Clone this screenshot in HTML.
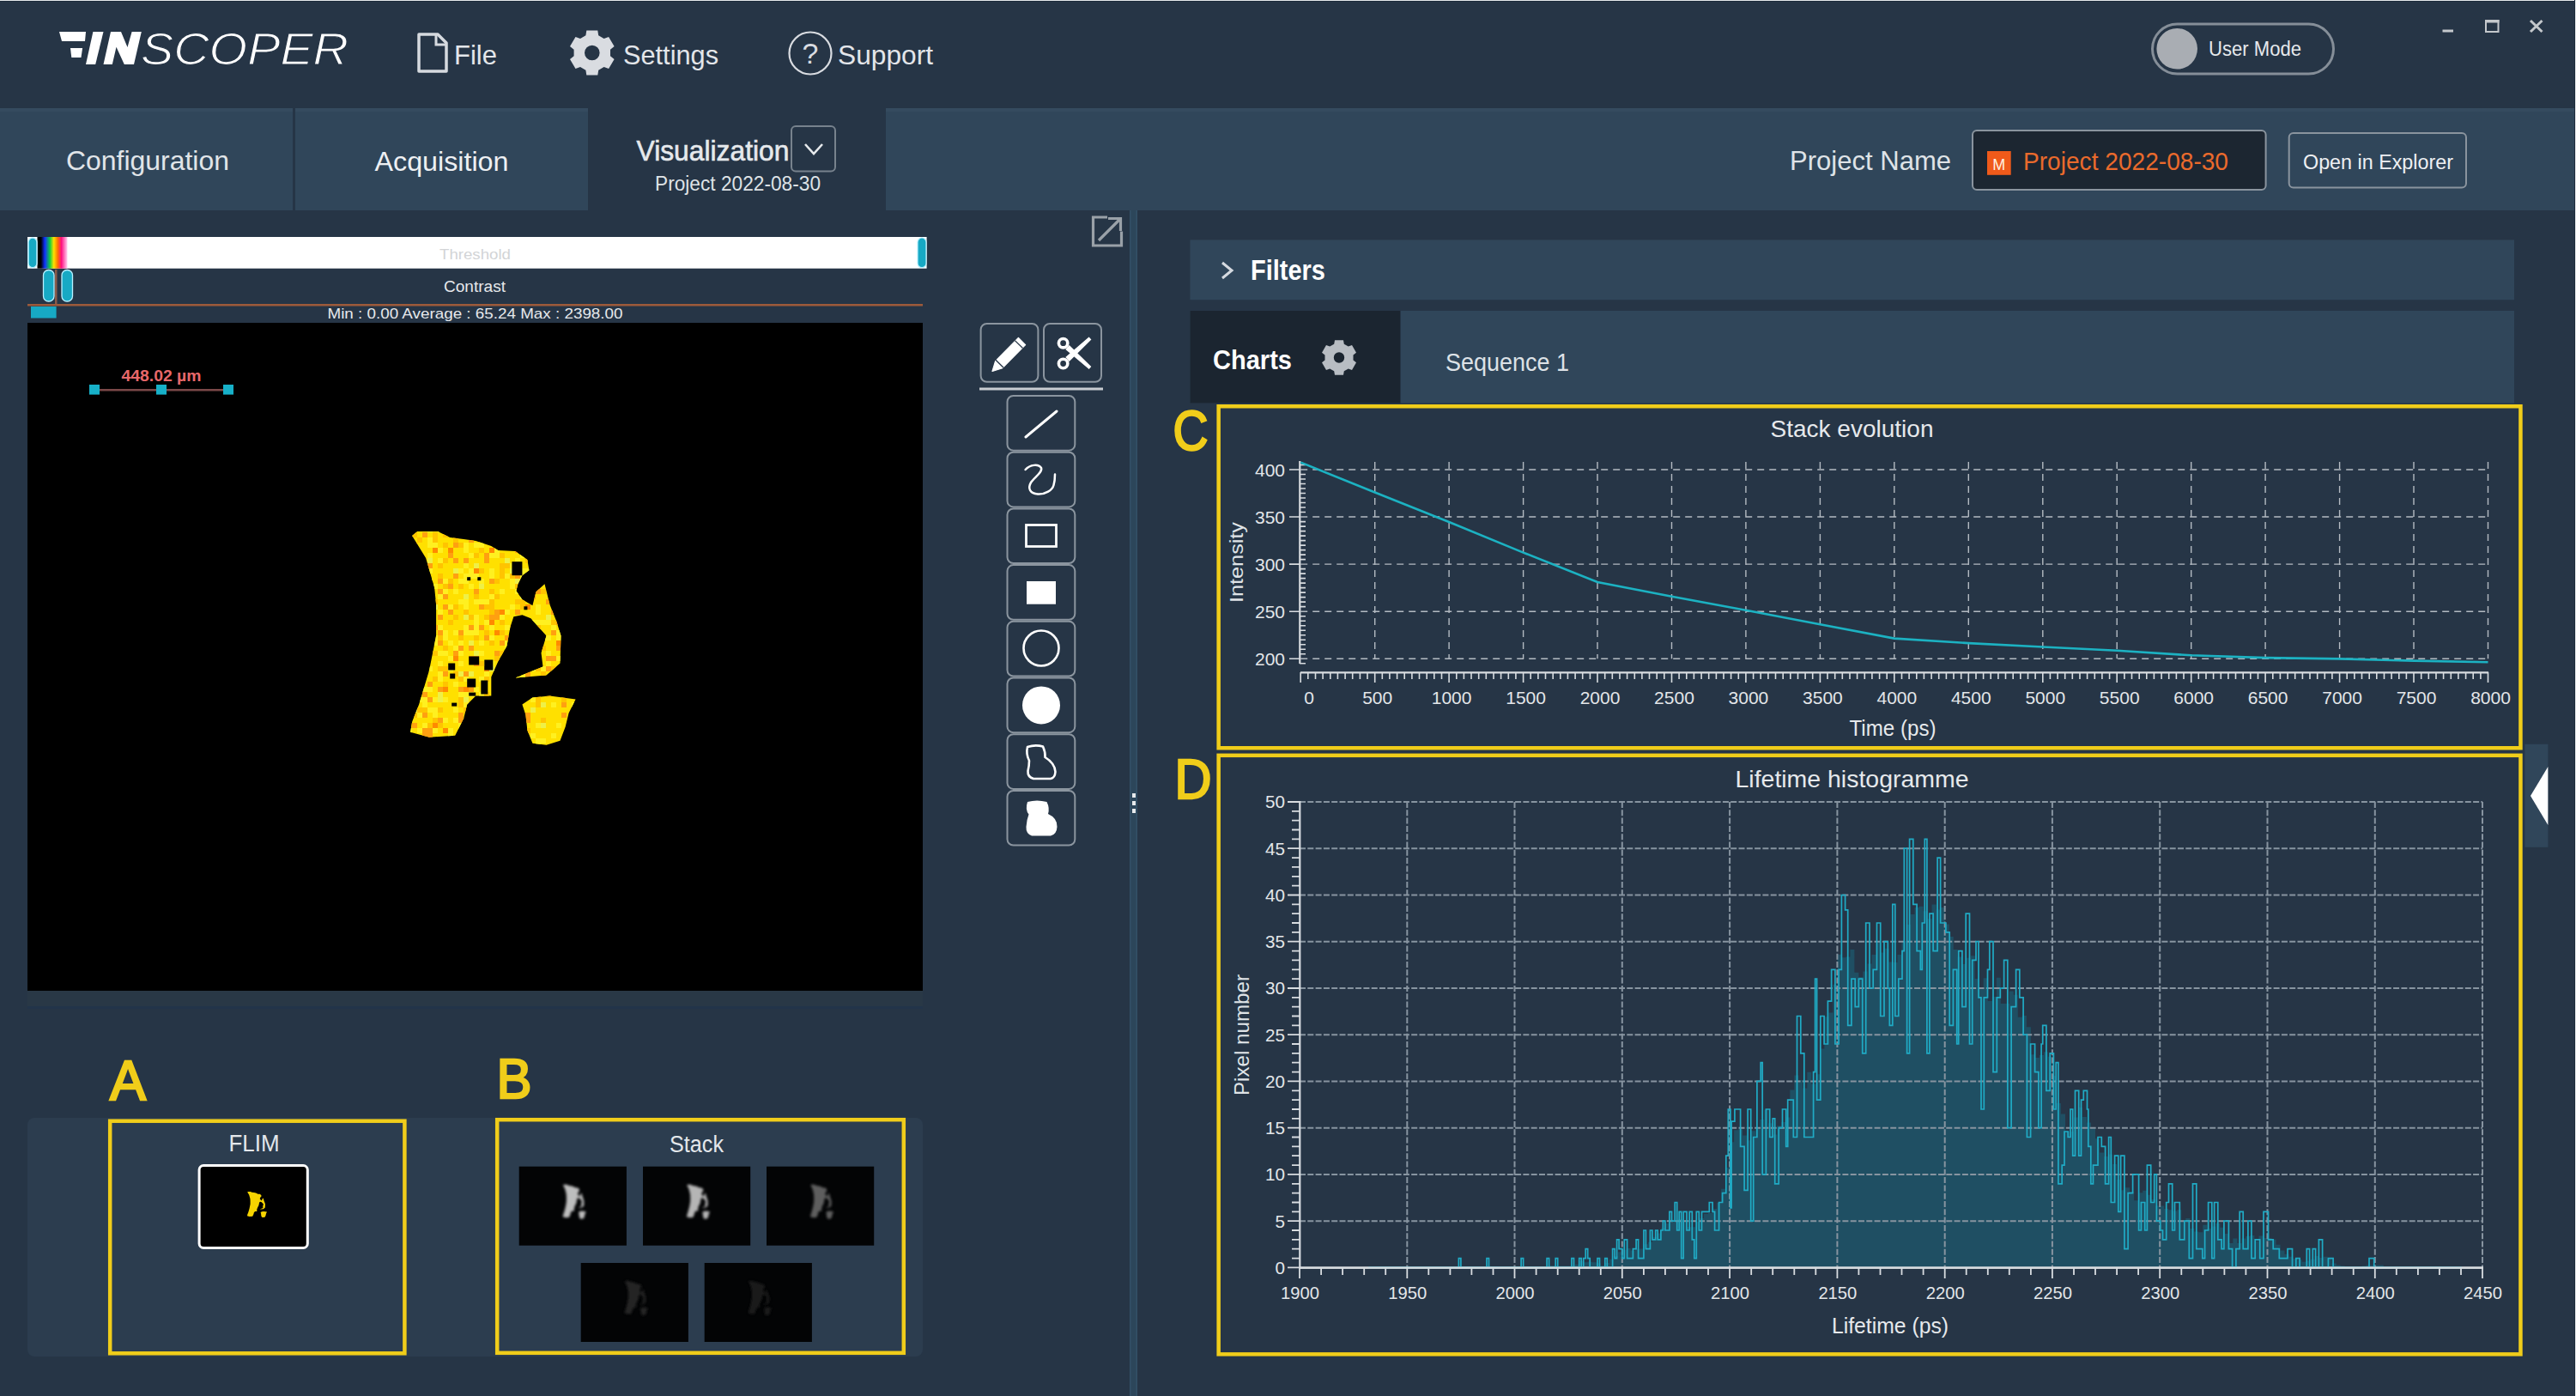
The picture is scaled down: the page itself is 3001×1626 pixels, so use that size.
<!DOCTYPE html><html><head><meta charset="utf-8"><title>Inscoper</title><style>html,body{margin:0;padding:0;background:#263546;overflow:hidden}svg{display:block}text{font-family:"Liberation Sans", sans-serif}</style></head><body>
<svg width="3001" height="1626" viewBox="0 0 3001 1626">
<defs><linearGradient id="rainbow" x1="0" x2="1" y1="0" y2="0"><stop offset="0" stop-color="#000"/><stop offset="0.12" stop-color="#000"/><stop offset="0.25" stop-color="#1030ff"/><stop offset="0.42" stop-color="#10d040"/><stop offset="0.55" stop-color="#ffe000"/><stop offset="0.68" stop-color="#ff7000"/><stop offset="0.8" stop-color="#ff1080"/><stop offset="1" stop-color="#ffd0f0"/></linearGradient></defs>
<rect x="0" y="0" width="3001" height="1626" fill="#263546" />
<g fill="#ffffff">
<polygon points="69,37 100,37 99,48 72,48"/>
<polygon points="82,56 96.1,56 94.5,67 83.3,67"/>
<polygon points="108.4,37 120.5,37 111.2,75 100,75"/>
<polygon points="129,37 141,37 148.5,55 153.6,37 164.8,37 156,75 144.8,75 135.5,54.7 130.8,75 120.5,75"/>
</g>
<text x="164" y="75" font-size="52" fill="#ffffff" textLength="242" lengthAdjust="spacingAndGlyphs" font-style="italic" stroke="#263546" stroke-width="1.2">SCOPER</text>
<path d="M488,40 H510 L520,50 V83 H488 Z" fill="none" stroke="#d6dadf" stroke-width="3.5" stroke-linejoin="round"/>
<path d="M508,40 V52 H520" fill="none" stroke="#d6dadf" stroke-width="3"/>
<text x="529" y="75" font-size="32" fill="#e3e6ea" textLength="50" lengthAdjust="spacingAndGlyphs" >File</text>
<path d="M682.4,41.3 L683.3,35.5 L696.3,35.5 L697.2,41.3 L703.6,45.0 L709.1,42.9 L715.6,54.1 L711.0,57.8 L711.0,65.2 L715.6,68.9 L709.1,80.1 L703.6,78.0 L697.2,81.7 L696.3,87.5 L683.3,87.5 L682.4,81.7 L676.0,78.0 L670.5,80.1 L664.0,68.9 L668.6,65.2 L668.6,57.8 L664.0,54.1 L670.5,42.9 L676.0,45.0 Z M698.5999999999999,61.5 A8.8,8.8 0 1 0 681.0,61.5 A8.8,8.8 0 1 0 698.5999999999999,61.5 Z" fill="#d9dce1" fill-rule="evenodd"/>
<text x="726" y="74.5" font-size="32" fill="#e3e6ea" textLength="111" lengthAdjust="spacingAndGlyphs" >Settings</text>
<circle cx="944" cy="62" r="24.5" fill="none" stroke="#d9dce1" stroke-width="2.2"/>
<text x="944" y="74" font-size="34" fill="#d9dce1" text-anchor="middle" >?</text>
<text x="976" y="74.5" font-size="32" fill="#e3e6ea" textLength="111" lengthAdjust="spacingAndGlyphs" >Support</text>
<rect x="2507.5" y="28" width="211" height="58" rx="29" fill="none" stroke="#858e98" stroke-width="3"/>
<circle cx="2536.2" cy="56.8" r="23.8" fill="#a9adb3"/>
<text x="2573" y="64.6" font-size="23" fill="#e6e9ec" textLength="108" lengthAdjust="spacingAndGlyphs" >User Mode</text>
<rect x="2845.5" y="34.5" width="12.5" height="3" fill="#c4c8cc" />
<rect x="2896" y="24" width="14.5" height="13" fill="none" stroke="#c4c8cc" stroke-width="2"/>
<rect x="2895" y="23" width="16.5" height="3.5" fill="#c4c8cc" />
<path d="M2948,24 L2961.5,37 M2961.5,24 L2948,37" stroke="#c4c8cc" stroke-width="3"/>
<rect x="0" y="126" width="3001" height="119" fill="#30465a" />
<rect x="0" y="126" width="3001" height="4" fill="#354b5f" />
<rect x="341" y="126" width="3" height="119" fill="#263546" />
<rect x="685" y="126" width="347" height="119" fill="#263546" />
<text x="77" y="198" font-size="30.7" fill="#e1e5e9" textLength="190" lengthAdjust="spacingAndGlyphs" >Configuration</text>
<text x="436.5" y="198.5" font-size="30.7" fill="#eef0f3" textLength="156" lengthAdjust="spacingAndGlyphs" >Acquisition</text>
<text x="741.5" y="187" font-size="33.5" fill="#e6e9ec" textLength="178" lengthAdjust="spacingAndGlyphs" stroke="#e6e9ec" stroke-width="0.6">Visualization</text>
<rect x="922" y="147" width="51" height="52.6" rx="5" fill="none" stroke="#77828d" stroke-width="2"/>
<path d="M938,168 L948,179 L958,168" fill="none" stroke="#e6e9ec" stroke-width="2.6"/>
<text x="763" y="222" font-size="23" fill="#dfe3e7" textLength="193" lengthAdjust="spacingAndGlyphs" >Project 2022-08-30</text>
<text x="2085" y="198" font-size="32" fill="#dfe3e7" textLength="188" lengthAdjust="spacingAndGlyphs" >Project Name</text>
<rect x="2298" y="152" width="341.6" height="69" rx="5" fill="#1c2631" stroke="#8a949e" stroke-width="2"/>
<rect x="2315" y="176" width="27.7" height="27.8" fill="#f05a1a" />
<text x="2328.8" y="197.5" font-size="19" fill="#fff0e0" text-anchor="middle" textLength="15" lengthAdjust="spacingAndGlyphs" >M</text>
<text x="2357" y="198" font-size="29.3" fill="#ea6a2c" textLength="239" lengthAdjust="spacingAndGlyphs" >Project 2022-08-30</text>
<rect x="2666.7" y="155" width="206.3" height="63.6" rx="5" fill="none" stroke="#8a949e" stroke-width="2"/>
<text x="2683" y="196.7" font-size="24.7" fill="#eef0f3" textLength="175" lengthAdjust="spacingAndGlyphs" >Open in Explorer</text>
<path d="M1290,253 H1273.5 V286 H1306.5 V269.5" fill="none" stroke="#9aa1a8" stroke-width="3.2"/>
<path d="M1280,280 L1304,256 M1291,254.5 H1305.5 V269" fill="none" stroke="#9aa1a8" stroke-width="3.2"/>
<rect x="32" y="276" width="1047.6" height="36.7" fill="#ffffff" />
<rect x="43.5" y="276" width="35" height="36.7" fill="url(#rainbow)" />
<rect x="33" y="277" width="10" height="34.7" rx="5" fill="#17a9c4" stroke="#b8f0ff" stroke-width="1.5"/>
<rect x="1069" y="277" width="10" height="34.7" rx="5" fill="#17a9c4" stroke="#b8f0ff" stroke-width="1.2"/>
<text x="512" y="301.5" font-size="17" fill="#d2d4d6" textLength="83" lengthAdjust="spacingAndGlyphs" >Threshold</text>
<rect x="64" y="314" width="2.5" height="41" fill="#8a5a48" />
<rect x="50.5" y="314.5" width="12.5" height="36.5" rx="6" fill="#17a9c4" stroke="#b8f0ff" stroke-width="1.3"/>
<rect x="72" y="314.5" width="12.5" height="36.5" rx="6" fill="#17a9c4" stroke="#b8f0ff" stroke-width="1.3"/>
<text x="517" y="340" font-size="18" fill="#e6e9ec" textLength="72" lengthAdjust="spacingAndGlyphs" >Contrast</text>
<rect x="32" y="354" width="1043" height="2.5" fill="#9c5a3a" />
<rect x="36" y="357" width="29.6" height="13.5" fill="#17a9c4" />
<text x="381.5" y="371" font-size="17" fill="#e6e9ec" textLength="344" lengthAdjust="spacingAndGlyphs" >Min : 0.00 Average : 65.24 Max : 2398.00</text>
<rect x="32" y="376" width="1043" height="778" fill="#000000" />
<rect x="32" y="1154" width="1043" height="18" fill="#293846" />
<rect x="32" y="1172" width="1043" height="3" fill="#22344a" />
<rect x="110" y="453" width="156" height="2.5" fill="#7a4848" />
<rect x="104" y="448" width="12" height="11.6" fill="#17b0c8" />
<rect x="182" y="448" width="12" height="11.6" fill="#17b0c8" />
<rect x="260" y="448" width="12" height="11.6" fill="#17b0c8" />
<text x="141.5" y="444" font-size="18" fill="#e8686a" font-weight="700" textLength="93" lengthAdjust="spacingAndGlyphs" >448.02 µm</text>
<defs><clipPath id="blobclip"><polygon points="480.1,624.1 486.1,619.1 510.1,619.1 524.2,626.1 540.2,628.1 554.3,630.1 572.3,636.1 580.3,641.1 600.4,642.1 614.4,652.1 616.4,664.2 608.4,670.2 603.4,680.2 601.4,688.2 608.4,698.3 620.4,705.3 624.5,689.2 634.5,680.2 640.5,704.3 648.5,724.3 653.5,740.4 652.5,772.5 636.5,786.5 600.4,789.5 632.5,776.5 630.5,760.4 636.5,740.4 618.4,720.3 608.4,716.3 598.4,718.3 594.4,730.4 590.4,752.4 580.3,770.5 572.3,788.5 572.3,810.6 554.3,810.6 544.2,820.6 540.2,836.7 530.2,856.7 500.1,858.7 478.1,852.7 480.1,840.7 488.1,820.6 494.1,800.6 500.1,780.5 504.1,760.4 508.1,740.4 508.1,704.3 506.1,684.2 496.1,650.1"/><polygon points="608.4,820.6 620.4,812.6 640.5,810.6 670.6,814.6 662.6,830.6 658.6,846.7 652.5,862.7 636.5,867.7 620.4,865.7 614.4,850.7 612.4,832.7"/></clipPath></defs>
<g clip-path="url(#blobclip)"><rect x="470" y="610" width="210" height="270" fill="#ffe000"/>
<rect x="474" y="620" width="6" height="6" fill="#fff020"/><rect x="474" y="626" width="6" height="6" fill="#ffa010"/><rect x="474" y="644" width="6" height="6" fill="#fff020"/><rect x="474" y="662" width="6" height="6" fill="#fff020"/><rect x="474" y="668" width="6" height="6" fill="#ffc400"/><rect x="474" y="692" width="6" height="6" fill="#ffc400"/><rect x="474" y="698" width="6" height="6" fill="#fff020"/><rect x="474" y="710" width="6" height="6" fill="#eef048"/><rect x="474" y="716" width="6" height="6" fill="#ff8a00"/><rect x="474" y="722" width="6" height="6" fill="#fff020"/><rect x="474" y="728" width="6" height="6" fill="#fff020"/><rect x="474" y="788" width="6" height="6" fill="#ffc400"/><rect x="474" y="800" width="6" height="6" fill="#fff020"/><rect x="474" y="812" width="6" height="6" fill="#fff020"/><rect x="474" y="830" width="6" height="6" fill="#eef048"/><rect x="474" y="836" width="6" height="6" fill="#eef048"/><rect x="474" y="842" width="6" height="6" fill="#ffc400"/><rect x="474" y="848" width="6" height="6" fill="#fff020"/><rect x="474" y="878" width="6" height="6" fill="#ffc400"/><rect x="480" y="620" width="6" height="6" fill="#ffc400"/><rect x="480" y="632" width="6" height="6" fill="#ff8a00"/><rect x="480" y="638" width="6" height="6" fill="#ffc400"/><rect x="480" y="656" width="6" height="6" fill="#ffa010"/><rect x="480" y="668" width="6" height="6" fill="#eef048"/><rect x="480" y="686" width="6" height="6" fill="#fff020"/><rect x="480" y="692" width="6" height="6" fill="#ffc400"/><rect x="480" y="716" width="6" height="6" fill="#ff8a00"/><rect x="480" y="722" width="6" height="6" fill="#ffc400"/><rect x="480" y="752" width="6" height="6" fill="#ffc400"/><rect x="480" y="764" width="6" height="6" fill="#fff020"/><rect x="480" y="782" width="6" height="6" fill="#fff020"/><rect x="480" y="794" width="6" height="6" fill="#fff020"/><rect x="480" y="824" width="6" height="6" fill="#eef048"/><rect x="480" y="830" width="6" height="6" fill="#ffc400"/><rect x="480" y="842" width="6" height="6" fill="#ffa010"/><rect x="480" y="860" width="6" height="6" fill="#ffc400"/><rect x="480" y="866" width="6" height="6" fill="#fff020"/><rect x="480" y="878" width="6" height="6" fill="#eef048"/><rect x="486" y="626" width="6" height="6" fill="#ffc400"/><rect x="486" y="656" width="6" height="6" fill="#fff020"/><rect x="486" y="668" width="6" height="6" fill="#fff020"/><rect x="486" y="686" width="6" height="6" fill="#ff8a00"/><rect x="486" y="698" width="6" height="6" fill="#fff020"/><rect x="486" y="704" width="6" height="6" fill="#ffa010"/><rect x="486" y="722" width="6" height="6" fill="#ffa010"/><rect x="486" y="728" width="6" height="6" fill="#ffc400"/><rect x="486" y="746" width="6" height="6" fill="#fff020"/><rect x="486" y="752" width="6" height="6" fill="#ffa010"/><rect x="486" y="764" width="6" height="6" fill="#ff8a00"/><rect x="486" y="770" width="6" height="6" fill="#ffa010"/><rect x="486" y="776" width="6" height="6" fill="#fff020"/><rect x="486" y="800" width="6" height="6" fill="#ff8a00"/><rect x="486" y="812" width="6" height="6" fill="#fff020"/><rect x="486" y="824" width="6" height="6" fill="#ffc400"/><rect x="486" y="830" width="6" height="6" fill="#fff020"/><rect x="486" y="848" width="6" height="6" fill="#fff020"/><rect x="486" y="866" width="6" height="6" fill="#fff020"/><rect x="486" y="872" width="6" height="6" fill="#ffc400"/><rect x="486" y="878" width="6" height="6" fill="#fff020"/><rect x="492" y="620" width="6" height="6" fill="#ffa010"/><rect x="492" y="668" width="6" height="6" fill="#fff020"/><rect x="492" y="686" width="6" height="6" fill="#ffa010"/><rect x="492" y="692" width="6" height="6" fill="#eef048"/><rect x="492" y="698" width="6" height="6" fill="#fff020"/><rect x="492" y="704" width="6" height="6" fill="#fff020"/><rect x="492" y="710" width="6" height="6" fill="#fff020"/><rect x="492" y="734" width="6" height="6" fill="#ffa010"/><rect x="492" y="740" width="6" height="6" fill="#fff020"/><rect x="492" y="746" width="6" height="6" fill="#ff8a00"/><rect x="492" y="758" width="6" height="6" fill="#fff020"/><rect x="492" y="770" width="6" height="6" fill="#fff020"/><rect x="492" y="782" width="6" height="6" fill="#eef048"/><rect x="492" y="800" width="6" height="6" fill="#fff020"/><rect x="492" y="806" width="6" height="6" fill="#ffa010"/><rect x="492" y="812" width="6" height="6" fill="#fff020"/><rect x="492" y="818" width="6" height="6" fill="#fff020"/><rect x="492" y="824" width="6" height="6" fill="#ffc400"/><rect x="492" y="830" width="6" height="6" fill="#ffa010"/><rect x="492" y="842" width="6" height="6" fill="#fff020"/><rect x="492" y="848" width="6" height="6" fill="#ffa010"/><rect x="492" y="854" width="6" height="6" fill="#ffa010"/><rect x="492" y="866" width="6" height="6" fill="#ffc400"/><rect x="492" y="872" width="6" height="6" fill="#ffa010"/><rect x="492" y="878" width="6" height="6" fill="#fff020"/><rect x="498" y="614" width="6" height="6" fill="#fff020"/><rect x="498" y="626" width="6" height="6" fill="#fff020"/><rect x="498" y="632" width="6" height="6" fill="#fff020"/><rect x="498" y="644" width="6" height="6" fill="#fff020"/><rect x="498" y="650" width="6" height="6" fill="#eef048"/><rect x="498" y="656" width="6" height="6" fill="#ffa010"/><rect x="498" y="662" width="6" height="6" fill="#fff020"/><rect x="498" y="674" width="6" height="6" fill="#fff020"/><rect x="498" y="680" width="6" height="6" fill="#fff020"/><rect x="498" y="692" width="6" height="6" fill="#ffc400"/><rect x="498" y="704" width="6" height="6" fill="#ffc400"/><rect x="498" y="716" width="6" height="6" fill="#fff020"/><rect x="498" y="734" width="6" height="6" fill="#fff020"/><rect x="498" y="746" width="6" height="6" fill="#fff020"/><rect x="498" y="752" width="6" height="6" fill="#ffa010"/><rect x="498" y="776" width="6" height="6" fill="#fff020"/><rect x="498" y="794" width="6" height="6" fill="#ffa010"/><rect x="498" y="800" width="6" height="6" fill="#fff020"/><rect x="498" y="812" width="6" height="6" fill="#ffa010"/><rect x="498" y="824" width="6" height="6" fill="#fff020"/><rect x="498" y="842" width="6" height="6" fill="#ffc400"/><rect x="498" y="848" width="6" height="6" fill="#ffa010"/><rect x="498" y="854" width="6" height="6" fill="#ffa010"/><rect x="498" y="866" width="6" height="6" fill="#fff020"/><rect x="504" y="620" width="6" height="6" fill="#ffc400"/><rect x="504" y="626" width="6" height="6" fill="#ffc400"/><rect x="504" y="632" width="6" height="6" fill="#fff020"/><rect x="504" y="638" width="6" height="6" fill="#ff8a00"/><rect x="504" y="680" width="6" height="6" fill="#fff020"/><rect x="504" y="698" width="6" height="6" fill="#ffc400"/><rect x="504" y="704" width="6" height="6" fill="#eef048"/><rect x="504" y="728" width="6" height="6" fill="#ffa010"/><rect x="504" y="740" width="6" height="6" fill="#fff020"/><rect x="504" y="746" width="6" height="6" fill="#fff020"/><rect x="504" y="758" width="6" height="6" fill="#ffc400"/><rect x="504" y="788" width="6" height="6" fill="#ffc400"/><rect x="504" y="812" width="6" height="6" fill="#fff020"/><rect x="504" y="824" width="6" height="6" fill="#fff020"/><rect x="504" y="830" width="6" height="6" fill="#fff020"/><rect x="504" y="836" width="6" height="6" fill="#ffc400"/><rect x="504" y="842" width="6" height="6" fill="#ff8a00"/><rect x="504" y="848" width="6" height="6" fill="#fff020"/><rect x="510" y="614" width="6" height="6" fill="#fff020"/><rect x="510" y="638" width="6" height="6" fill="#fff020"/><rect x="510" y="650" width="6" height="6" fill="#fff020"/><rect x="510" y="656" width="6" height="6" fill="#ffc400"/><rect x="510" y="668" width="6" height="6" fill="#ffc400"/><rect x="510" y="674" width="6" height="6" fill="#ffa010"/><rect x="510" y="686" width="6" height="6" fill="#ffa010"/><rect x="510" y="692" width="6" height="6" fill="#fff020"/><rect x="510" y="710" width="6" height="6" fill="#fff020"/><rect x="510" y="716" width="6" height="6" fill="#ffa010"/><rect x="510" y="728" width="6" height="6" fill="#fff020"/><rect x="510" y="734" width="6" height="6" fill="#ffa010"/><rect x="510" y="740" width="6" height="6" fill="#ffc400"/><rect x="510" y="746" width="6" height="6" fill="#ffa010"/><rect x="510" y="758" width="6" height="6" fill="#fff020"/><rect x="510" y="770" width="6" height="6" fill="#fff020"/><rect x="510" y="776" width="6" height="6" fill="#ffc400"/><rect x="510" y="782" width="6" height="6" fill="#fff020"/><rect x="510" y="788" width="6" height="6" fill="#fff020"/><rect x="510" y="800" width="6" height="6" fill="#ffa010"/><rect x="510" y="806" width="6" height="6" fill="#eef048"/><rect x="510" y="812" width="6" height="6" fill="#eef048"/><rect x="510" y="824" width="6" height="6" fill="#ffc400"/><rect x="510" y="836" width="6" height="6" fill="#ffa010"/><rect x="510" y="842" width="6" height="6" fill="#ffc400"/><rect x="510" y="866" width="6" height="6" fill="#fff020"/><rect x="510" y="872" width="6" height="6" fill="#ffc400"/><rect x="516" y="620" width="6" height="6" fill="#ffc400"/><rect x="516" y="632" width="6" height="6" fill="#ffc400"/><rect x="516" y="650" width="6" height="6" fill="#ffc400"/><rect x="516" y="674" width="6" height="6" fill="#fff020"/><rect x="516" y="680" width="6" height="6" fill="#ffc400"/><rect x="516" y="686" width="6" height="6" fill="#fff020"/><rect x="516" y="692" width="6" height="6" fill="#ffa010"/><rect x="516" y="704" width="6" height="6" fill="#ffa010"/><rect x="516" y="734" width="6" height="6" fill="#fff020"/><rect x="516" y="740" width="6" height="6" fill="#fff020"/><rect x="516" y="752" width="6" height="6" fill="#ffc400"/><rect x="516" y="758" width="6" height="6" fill="#fff020"/><rect x="516" y="776" width="6" height="6" fill="#ffc400"/><rect x="516" y="782" width="6" height="6" fill="#ffa010"/><rect x="516" y="794" width="6" height="6" fill="#ffc400"/><rect x="516" y="800" width="6" height="6" fill="#ff8a00"/><rect x="516" y="812" width="6" height="6" fill="#fff020"/><rect x="516" y="836" width="6" height="6" fill="#fff020"/><rect x="516" y="848" width="6" height="6" fill="#ff8a00"/><rect x="516" y="866" width="6" height="6" fill="#ffc400"/><rect x="516" y="872" width="6" height="6" fill="#fff020"/><rect x="522" y="614" width="6" height="6" fill="#fff020"/><rect x="522" y="638" width="6" height="6" fill="#ff8a00"/><rect x="522" y="644" width="6" height="6" fill="#ffa010"/><rect x="522" y="674" width="6" height="6" fill="#ffc400"/><rect x="522" y="680" width="6" height="6" fill="#ffa010"/><rect x="522" y="704" width="6" height="6" fill="#fff020"/><rect x="522" y="710" width="6" height="6" fill="#ffa010"/><rect x="522" y="722" width="6" height="6" fill="#ffc400"/><rect x="522" y="746" width="6" height="6" fill="#fff020"/><rect x="522" y="764" width="6" height="6" fill="#fff020"/><rect x="522" y="776" width="6" height="6" fill="#fff020"/><rect x="522" y="848" width="6" height="6" fill="#fff020"/><rect x="522" y="854" width="6" height="6" fill="#fff020"/><rect x="522" y="866" width="6" height="6" fill="#ffc400"/><rect x="522" y="872" width="6" height="6" fill="#fff020"/><rect x="522" y="878" width="6" height="6" fill="#ffc400"/><rect x="528" y="620" width="6" height="6" fill="#fff020"/><rect x="528" y="626" width="6" height="6" fill="#ffc400"/><rect x="528" y="632" width="6" height="6" fill="#ffa010"/><rect x="528" y="650" width="6" height="6" fill="#ffa010"/><rect x="528" y="662" width="6" height="6" fill="#eef048"/><rect x="528" y="668" width="6" height="6" fill="#ffa010"/><rect x="528" y="686" width="6" height="6" fill="#fff020"/><rect x="528" y="704" width="6" height="6" fill="#ffc400"/><rect x="528" y="716" width="6" height="6" fill="#ffc400"/><rect x="528" y="734" width="6" height="6" fill="#fff020"/><rect x="528" y="752" width="6" height="6" fill="#fff020"/><rect x="528" y="758" width="6" height="6" fill="#ffa010"/><rect x="528" y="764" width="6" height="6" fill="#ff8a00"/><rect x="528" y="782" width="6" height="6" fill="#ffc400"/><rect x="528" y="794" width="6" height="6" fill="#fff020"/><rect x="528" y="824" width="6" height="6" fill="#fff020"/><rect x="528" y="836" width="6" height="6" fill="#fff020"/><rect x="528" y="860" width="6" height="6" fill="#ffc400"/><rect x="528" y="866" width="6" height="6" fill="#eef048"/><rect x="528" y="872" width="6" height="6" fill="#ffa010"/><rect x="534" y="620" width="6" height="6" fill="#ff8a00"/><rect x="534" y="632" width="6" height="6" fill="#ffc400"/><rect x="534" y="662" width="6" height="6" fill="#fff020"/><rect x="534" y="674" width="6" height="6" fill="#fff020"/><rect x="534" y="680" width="6" height="6" fill="#ffc400"/><rect x="534" y="698" width="6" height="6" fill="#fff020"/><rect x="534" y="734" width="6" height="6" fill="#ffa010"/><rect x="534" y="740" width="6" height="6" fill="#ffc400"/><rect x="534" y="746" width="6" height="6" fill="#fff020"/><rect x="534" y="752" width="6" height="6" fill="#ffa010"/><rect x="534" y="758" width="6" height="6" fill="#fff020"/><rect x="534" y="770" width="6" height="6" fill="#fff020"/><rect x="534" y="782" width="6" height="6" fill="#eef048"/><rect x="534" y="788" width="6" height="6" fill="#ffc400"/><rect x="534" y="800" width="6" height="6" fill="#ffa010"/><rect x="534" y="806" width="6" height="6" fill="#fff020"/><rect x="534" y="812" width="6" height="6" fill="#ffc400"/><rect x="534" y="818" width="6" height="6" fill="#ffc400"/><rect x="534" y="830" width="6" height="6" fill="#ffa010"/><rect x="534" y="836" width="6" height="6" fill="#ffa010"/><rect x="534" y="842" width="6" height="6" fill="#fff020"/><rect x="534" y="848" width="6" height="6" fill="#ffc400"/><rect x="534" y="854" width="6" height="6" fill="#ffc400"/><rect x="534" y="866" width="6" height="6" fill="#fff020"/><rect x="540" y="632" width="6" height="6" fill="#fff020"/><rect x="540" y="638" width="6" height="6" fill="#fff020"/><rect x="540" y="650" width="6" height="6" fill="#ffa010"/><rect x="540" y="656" width="6" height="6" fill="#fff020"/><rect x="540" y="668" width="6" height="6" fill="#fff020"/><rect x="540" y="674" width="6" height="6" fill="#fff020"/><rect x="540" y="692" width="6" height="6" fill="#eef048"/><rect x="540" y="698" width="6" height="6" fill="#fff020"/><rect x="540" y="704" width="6" height="6" fill="#fff020"/><rect x="540" y="710" width="6" height="6" fill="#ffc400"/><rect x="540" y="716" width="6" height="6" fill="#eef048"/><rect x="540" y="728" width="6" height="6" fill="#fff020"/><rect x="540" y="734" width="6" height="6" fill="#fff020"/><rect x="540" y="782" width="6" height="6" fill="#ffa010"/><rect x="540" y="788" width="6" height="6" fill="#fff020"/><rect x="540" y="800" width="6" height="6" fill="#ff8a00"/><rect x="540" y="806" width="6" height="6" fill="#fff020"/><rect x="540" y="812" width="6" height="6" fill="#eef048"/><rect x="540" y="818" width="6" height="6" fill="#fff020"/><rect x="540" y="824" width="6" height="6" fill="#ffc400"/><rect x="540" y="836" width="6" height="6" fill="#fff020"/><rect x="540" y="842" width="6" height="6" fill="#ffc400"/><rect x="540" y="854" width="6" height="6" fill="#ffa010"/><rect x="546" y="614" width="6" height="6" fill="#fff020"/><rect x="546" y="626" width="6" height="6" fill="#ffa010"/><rect x="546" y="644" width="6" height="6" fill="#fff020"/><rect x="546" y="662" width="6" height="6" fill="#fff020"/><rect x="546" y="668" width="6" height="6" fill="#fff020"/><rect x="546" y="680" width="6" height="6" fill="#fff020"/><rect x="546" y="716" width="6" height="6" fill="#ffc400"/><rect x="546" y="728" width="6" height="6" fill="#ffa010"/><rect x="546" y="734" width="6" height="6" fill="#fff020"/><rect x="546" y="746" width="6" height="6" fill="#eef048"/><rect x="546" y="752" width="6" height="6" fill="#ffa010"/><rect x="546" y="764" width="6" height="6" fill="#ffa010"/><rect x="546" y="782" width="6" height="6" fill="#eef048"/><rect x="546" y="800" width="6" height="6" fill="#ffa010"/><rect x="546" y="806" width="6" height="6" fill="#fff020"/><rect x="546" y="818" width="6" height="6" fill="#eef048"/><rect x="546" y="824" width="6" height="6" fill="#ffc400"/><rect x="546" y="830" width="6" height="6" fill="#fff020"/><rect x="546" y="842" width="6" height="6" fill="#fff020"/><rect x="552" y="614" width="6" height="6" fill="#fff020"/><rect x="552" y="632" width="6" height="6" fill="#fff020"/><rect x="552" y="644" width="6" height="6" fill="#ffc400"/><rect x="552" y="656" width="6" height="6" fill="#eef048"/><rect x="552" y="662" width="6" height="6" fill="#ff8a00"/><rect x="552" y="668" width="6" height="6" fill="#fff020"/><rect x="552" y="686" width="6" height="6" fill="#ffa010"/><rect x="552" y="692" width="6" height="6" fill="#ffc400"/><rect x="552" y="698" width="6" height="6" fill="#fff020"/><rect x="552" y="716" width="6" height="6" fill="#fff020"/><rect x="552" y="722" width="6" height="6" fill="#fff020"/><rect x="552" y="728" width="6" height="6" fill="#fff020"/><rect x="552" y="734" width="6" height="6" fill="#fff020"/><rect x="552" y="740" width="6" height="6" fill="#ffc400"/><rect x="552" y="758" width="6" height="6" fill="#eef048"/><rect x="552" y="764" width="6" height="6" fill="#ffa010"/><rect x="552" y="770" width="6" height="6" fill="#ffa010"/><rect x="552" y="800" width="6" height="6" fill="#fff020"/><rect x="552" y="830" width="6" height="6" fill="#fff020"/><rect x="552" y="836" width="6" height="6" fill="#fff020"/><rect x="552" y="842" width="6" height="6" fill="#fff020"/><rect x="552" y="872" width="6" height="6" fill="#fff020"/><rect x="552" y="878" width="6" height="6" fill="#ffc400"/><rect x="558" y="626" width="6" height="6" fill="#ffc400"/><rect x="558" y="632" width="6" height="6" fill="#fff020"/><rect x="558" y="638" width="6" height="6" fill="#ffc400"/><rect x="558" y="662" width="6" height="6" fill="#ffc400"/><rect x="558" y="674" width="6" height="6" fill="#fff020"/><rect x="558" y="680" width="6" height="6" fill="#eef048"/><rect x="558" y="698" width="6" height="6" fill="#fff020"/><rect x="558" y="704" width="6" height="6" fill="#ffa010"/><rect x="558" y="728" width="6" height="6" fill="#ffa010"/><rect x="558" y="746" width="6" height="6" fill="#fff020"/><rect x="558" y="758" width="6" height="6" fill="#fff020"/><rect x="558" y="770" width="6" height="6" fill="#ffc400"/><rect x="558" y="788" width="6" height="6" fill="#fff020"/><rect x="558" y="806" width="6" height="6" fill="#fff020"/><rect x="558" y="812" width="6" height="6" fill="#fff020"/><rect x="558" y="836" width="6" height="6" fill="#fff020"/><rect x="558" y="854" width="6" height="6" fill="#fff020"/><rect x="558" y="860" width="6" height="6" fill="#fff020"/><rect x="558" y="866" width="6" height="6" fill="#ffa010"/><rect x="558" y="872" width="6" height="6" fill="#ffa010"/><rect x="558" y="878" width="6" height="6" fill="#ffa010"/><rect x="564" y="620" width="6" height="6" fill="#ffc400"/><rect x="564" y="644" width="6" height="6" fill="#ffa010"/><rect x="564" y="650" width="6" height="6" fill="#ffa010"/><rect x="564" y="698" width="6" height="6" fill="#fff020"/><rect x="564" y="704" width="6" height="6" fill="#ffc400"/><rect x="564" y="716" width="6" height="6" fill="#ffc400"/><rect x="564" y="722" width="6" height="6" fill="#fff020"/><rect x="564" y="734" width="6" height="6" fill="#ffc400"/><rect x="564" y="740" width="6" height="6" fill="#ffa010"/><rect x="564" y="770" width="6" height="6" fill="#fff020"/><rect x="564" y="776" width="6" height="6" fill="#ff8a00"/><rect x="564" y="782" width="6" height="6" fill="#fff020"/><rect x="564" y="788" width="6" height="6" fill="#ffc400"/><rect x="564" y="806" width="6" height="6" fill="#ffc400"/><rect x="564" y="824" width="6" height="6" fill="#fff020"/><rect x="564" y="830" width="6" height="6" fill="#ffa010"/><rect x="564" y="842" width="6" height="6" fill="#fff020"/><rect x="564" y="854" width="6" height="6" fill="#fff020"/><rect x="564" y="860" width="6" height="6" fill="#fff020"/><rect x="564" y="878" width="6" height="6" fill="#ffc400"/><rect x="570" y="620" width="6" height="6" fill="#ffc400"/><rect x="570" y="638" width="6" height="6" fill="#ff8a00"/><rect x="570" y="644" width="6" height="6" fill="#fff020"/><rect x="570" y="662" width="6" height="6" fill="#fff020"/><rect x="570" y="668" width="6" height="6" fill="#fff020"/><rect x="570" y="674" width="6" height="6" fill="#ffa010"/><rect x="570" y="686" width="6" height="6" fill="#ffc400"/><rect x="570" y="692" width="6" height="6" fill="#fff020"/><rect x="570" y="698" width="6" height="6" fill="#ffc400"/><rect x="570" y="704" width="6" height="6" fill="#ffc400"/><rect x="570" y="710" width="6" height="6" fill="#ffc400"/><rect x="570" y="716" width="6" height="6" fill="#ffa010"/><rect x="570" y="722" width="6" height="6" fill="#ff8a00"/><rect x="570" y="728" width="6" height="6" fill="#fff020"/><rect x="570" y="740" width="6" height="6" fill="#fff020"/><rect x="570" y="746" width="6" height="6" fill="#ffc400"/><rect x="570" y="770" width="6" height="6" fill="#fff020"/><rect x="570" y="776" width="6" height="6" fill="#eef048"/><rect x="570" y="812" width="6" height="6" fill="#ff8a00"/><rect x="570" y="836" width="6" height="6" fill="#fff020"/><rect x="570" y="842" width="6" height="6" fill="#ffc400"/><rect x="570" y="866" width="6" height="6" fill="#fff020"/><rect x="570" y="872" width="6" height="6" fill="#ffa010"/><rect x="576" y="638" width="6" height="6" fill="#fff020"/><rect x="576" y="644" width="6" height="6" fill="#fff020"/><rect x="576" y="674" width="6" height="6" fill="#ffc400"/><rect x="576" y="692" width="6" height="6" fill="#ffc400"/><rect x="576" y="710" width="6" height="6" fill="#ffa010"/><rect x="576" y="716" width="6" height="6" fill="#ffa010"/><rect x="576" y="734" width="6" height="6" fill="#ff8a00"/><rect x="576" y="758" width="6" height="6" fill="#ffa010"/><rect x="576" y="764" width="6" height="6" fill="#ffc400"/><rect x="576" y="794" width="6" height="6" fill="#eef048"/><rect x="576" y="800" width="6" height="6" fill="#fff020"/><rect x="576" y="830" width="6" height="6" fill="#ffc400"/><rect x="576" y="836" width="6" height="6" fill="#fff020"/><rect x="576" y="842" width="6" height="6" fill="#fff020"/><rect x="576" y="872" width="6" height="6" fill="#ffa010"/><rect x="582" y="614" width="6" height="6" fill="#fff020"/><rect x="582" y="620" width="6" height="6" fill="#eef048"/><rect x="582" y="644" width="6" height="6" fill="#ffc400"/><rect x="582" y="656" width="6" height="6" fill="#ffc400"/><rect x="582" y="662" width="6" height="6" fill="#ffc400"/><rect x="582" y="668" width="6" height="6" fill="#ffc400"/><rect x="582" y="686" width="6" height="6" fill="#fff020"/><rect x="582" y="710" width="6" height="6" fill="#ff8a00"/><rect x="582" y="716" width="6" height="6" fill="#fff020"/><rect x="582" y="722" width="6" height="6" fill="#ffc400"/><rect x="582" y="734" width="6" height="6" fill="#ffc400"/><rect x="582" y="746" width="6" height="6" fill="#ffa010"/><rect x="582" y="758" width="6" height="6" fill="#ffc400"/><rect x="582" y="788" width="6" height="6" fill="#ffc400"/><rect x="582" y="824" width="6" height="6" fill="#fff020"/><rect x="582" y="836" width="6" height="6" fill="#fff020"/><rect x="582" y="860" width="6" height="6" fill="#ff8a00"/><rect x="582" y="866" width="6" height="6" fill="#ffc400"/><rect x="582" y="872" width="6" height="6" fill="#fff020"/><rect x="588" y="620" width="6" height="6" fill="#fff020"/><rect x="588" y="632" width="6" height="6" fill="#fff020"/><rect x="588" y="650" width="6" height="6" fill="#eef048"/><rect x="588" y="656" width="6" height="6" fill="#ffc400"/><rect x="588" y="668" width="6" height="6" fill="#fff020"/><rect x="588" y="710" width="6" height="6" fill="#fff020"/><rect x="588" y="728" width="6" height="6" fill="#fff020"/><rect x="588" y="740" width="6" height="6" fill="#ffa010"/><rect x="588" y="746" width="6" height="6" fill="#fff020"/><rect x="588" y="752" width="6" height="6" fill="#fff020"/><rect x="588" y="764" width="6" height="6" fill="#ffc400"/><rect x="588" y="788" width="6" height="6" fill="#fff020"/><rect x="588" y="794" width="6" height="6" fill="#fff020"/><rect x="588" y="812" width="6" height="6" fill="#ffc400"/><rect x="588" y="818" width="6" height="6" fill="#fff020"/><rect x="588" y="860" width="6" height="6" fill="#ffa010"/><rect x="588" y="878" width="6" height="6" fill="#fff020"/><rect x="594" y="614" width="6" height="6" fill="#ffc400"/><rect x="594" y="620" width="6" height="6" fill="#ffc400"/><rect x="594" y="656" width="6" height="6" fill="#fff020"/><rect x="594" y="662" width="6" height="6" fill="#eef048"/><rect x="594" y="668" width="6" height="6" fill="#ffc400"/><rect x="594" y="674" width="6" height="6" fill="#fff020"/><rect x="594" y="680" width="6" height="6" fill="#fff020"/><rect x="594" y="704" width="6" height="6" fill="#fff020"/><rect x="594" y="728" width="6" height="6" fill="#ffc400"/><rect x="594" y="734" width="6" height="6" fill="#ffc400"/><rect x="594" y="740" width="6" height="6" fill="#fff020"/><rect x="594" y="752" width="6" height="6" fill="#ffc400"/><rect x="594" y="758" width="6" height="6" fill="#ffa010"/><rect x="594" y="788" width="6" height="6" fill="#fff020"/><rect x="594" y="794" width="6" height="6" fill="#eef048"/><rect x="594" y="806" width="6" height="6" fill="#fff020"/><rect x="594" y="812" width="6" height="6" fill="#ffc400"/><rect x="594" y="824" width="6" height="6" fill="#ffa010"/><rect x="594" y="830" width="6" height="6" fill="#fff020"/><rect x="594" y="854" width="6" height="6" fill="#fff020"/><rect x="594" y="860" width="6" height="6" fill="#fff020"/><rect x="594" y="872" width="6" height="6" fill="#ffa010"/><rect x="600" y="626" width="6" height="6" fill="#eef048"/><rect x="600" y="638" width="6" height="6" fill="#ffa010"/><rect x="600" y="650" width="6" height="6" fill="#fff020"/><rect x="600" y="656" width="6" height="6" fill="#fff020"/><rect x="600" y="668" width="6" height="6" fill="#ffa010"/><rect x="600" y="674" width="6" height="6" fill="#eef048"/><rect x="600" y="680" width="6" height="6" fill="#ffc400"/><rect x="600" y="686" width="6" height="6" fill="#fff020"/><rect x="600" y="698" width="6" height="6" fill="#ffc400"/><rect x="600" y="710" width="6" height="6" fill="#ffa010"/><rect x="600" y="722" width="6" height="6" fill="#fff020"/><rect x="600" y="728" width="6" height="6" fill="#ffc400"/><rect x="600" y="764" width="6" height="6" fill="#eef048"/><rect x="600" y="770" width="6" height="6" fill="#ffa010"/><rect x="600" y="776" width="6" height="6" fill="#fff020"/><rect x="600" y="788" width="6" height="6" fill="#fff020"/><rect x="600" y="794" width="6" height="6" fill="#fff020"/><rect x="600" y="806" width="6" height="6" fill="#fff020"/><rect x="600" y="812" width="6" height="6" fill="#ffc400"/><rect x="600" y="848" width="6" height="6" fill="#fff020"/><rect x="600" y="872" width="6" height="6" fill="#fff020"/><rect x="606" y="614" width="6" height="6" fill="#fff020"/><rect x="606" y="626" width="6" height="6" fill="#fff020"/><rect x="606" y="638" width="6" height="6" fill="#ff8a00"/><rect x="606" y="644" width="6" height="6" fill="#fff020"/><rect x="606" y="662" width="6" height="6" fill="#fff020"/><rect x="606" y="668" width="6" height="6" fill="#fff020"/><rect x="606" y="674" width="6" height="6" fill="#ffc400"/><rect x="606" y="680" width="6" height="6" fill="#ffc400"/><rect x="606" y="692" width="6" height="6" fill="#eef048"/><rect x="606" y="698" width="6" height="6" fill="#ffc400"/><rect x="606" y="704" width="6" height="6" fill="#ffc400"/><rect x="606" y="722" width="6" height="6" fill="#fff020"/><rect x="606" y="728" width="6" height="6" fill="#ffa010"/><rect x="606" y="752" width="6" height="6" fill="#ffa010"/><rect x="606" y="770" width="6" height="6" fill="#fff020"/><rect x="606" y="776" width="6" height="6" fill="#ffa010"/><rect x="606" y="782" width="6" height="6" fill="#fff020"/><rect x="606" y="788" width="6" height="6" fill="#fff020"/><rect x="606" y="794" width="6" height="6" fill="#ffc400"/><rect x="606" y="806" width="6" height="6" fill="#fff020"/><rect x="606" y="848" width="6" height="6" fill="#fff020"/><rect x="612" y="620" width="6" height="6" fill="#ffa010"/><rect x="612" y="626" width="6" height="6" fill="#ff8a00"/><rect x="612" y="632" width="6" height="6" fill="#fff020"/><rect x="612" y="638" width="6" height="6" fill="#ffa010"/><rect x="612" y="650" width="6" height="6" fill="#ffc400"/><rect x="612" y="662" width="6" height="6" fill="#fff020"/><rect x="612" y="668" width="6" height="6" fill="#fff020"/><rect x="612" y="674" width="6" height="6" fill="#ffa010"/><rect x="612" y="686" width="6" height="6" fill="#ffc400"/><rect x="612" y="704" width="6" height="6" fill="#ff8a00"/><rect x="612" y="740" width="6" height="6" fill="#ffa010"/><rect x="612" y="746" width="6" height="6" fill="#ffc400"/><rect x="612" y="764" width="6" height="6" fill="#fff020"/><rect x="612" y="782" width="6" height="6" fill="#ffa010"/><rect x="612" y="800" width="6" height="6" fill="#ffa010"/><rect x="612" y="806" width="6" height="6" fill="#eef048"/><rect x="612" y="830" width="6" height="6" fill="#ffa010"/><rect x="612" y="836" width="6" height="6" fill="#ffa010"/><rect x="612" y="848" width="6" height="6" fill="#ffc400"/><rect x="612" y="872" width="6" height="6" fill="#ffa010"/><rect x="612" y="878" width="6" height="6" fill="#eef048"/><rect x="618" y="620" width="6" height="6" fill="#fff020"/><rect x="618" y="632" width="6" height="6" fill="#ffa010"/><rect x="618" y="650" width="6" height="6" fill="#fff020"/><rect x="618" y="662" width="6" height="6" fill="#ffa010"/><rect x="618" y="668" width="6" height="6" fill="#ffa010"/><rect x="618" y="674" width="6" height="6" fill="#fff020"/><rect x="618" y="686" width="6" height="6" fill="#fff020"/><rect x="618" y="692" width="6" height="6" fill="#ffa010"/><rect x="618" y="722" width="6" height="6" fill="#fff020"/><rect x="618" y="746" width="6" height="6" fill="#fff020"/><rect x="618" y="752" width="6" height="6" fill="#ffc400"/><rect x="618" y="764" width="6" height="6" fill="#fff020"/><rect x="618" y="770" width="6" height="6" fill="#ffa010"/><rect x="618" y="776" width="6" height="6" fill="#fff020"/><rect x="618" y="794" width="6" height="6" fill="#ffa010"/><rect x="618" y="800" width="6" height="6" fill="#fff020"/><rect x="618" y="812" width="6" height="6" fill="#fff020"/><rect x="618" y="824" width="6" height="6" fill="#eef048"/><rect x="618" y="854" width="6" height="6" fill="#fff020"/><rect x="618" y="872" width="6" height="6" fill="#ffc400"/><rect x="624" y="620" width="6" height="6" fill="#ffc400"/><rect x="624" y="650" width="6" height="6" fill="#ffa010"/><rect x="624" y="656" width="6" height="6" fill="#eef048"/><rect x="624" y="674" width="6" height="6" fill="#ffc400"/><rect x="624" y="686" width="6" height="6" fill="#ffa010"/><rect x="624" y="704" width="6" height="6" fill="#fff020"/><rect x="624" y="710" width="6" height="6" fill="#fff020"/><rect x="624" y="722" width="6" height="6" fill="#fff020"/><rect x="624" y="728" width="6" height="6" fill="#ffc400"/><rect x="624" y="746" width="6" height="6" fill="#ffc400"/><rect x="624" y="752" width="6" height="6" fill="#fff020"/><rect x="624" y="764" width="6" height="6" fill="#ff8a00"/><rect x="624" y="776" width="6" height="6" fill="#ffc400"/><rect x="624" y="788" width="6" height="6" fill="#fff020"/><rect x="624" y="806" width="6" height="6" fill="#ffc400"/><rect x="624" y="812" width="6" height="6" fill="#ffc400"/><rect x="624" y="818" width="6" height="6" fill="#ffc400"/><rect x="624" y="842" width="6" height="6" fill="#fff020"/><rect x="624" y="860" width="6" height="6" fill="#fff020"/><rect x="624" y="866" width="6" height="6" fill="#fff020"/><rect x="624" y="872" width="6" height="6" fill="#fff020"/><rect x="624" y="878" width="6" height="6" fill="#ffa010"/><rect x="630" y="656" width="6" height="6" fill="#ffc400"/><rect x="630" y="668" width="6" height="6" fill="#ffa010"/><rect x="630" y="674" width="6" height="6" fill="#fff020"/><rect x="630" y="686" width="6" height="6" fill="#ffc400"/><rect x="630" y="722" width="6" height="6" fill="#fff020"/><rect x="630" y="740" width="6" height="6" fill="#fff020"/><rect x="630" y="752" width="6" height="6" fill="#ffc400"/><rect x="630" y="776" width="6" height="6" fill="#fff020"/><rect x="630" y="782" width="6" height="6" fill="#ffc400"/><rect x="630" y="788" width="6" height="6" fill="#ffc400"/><rect x="630" y="818" width="6" height="6" fill="#eef048"/><rect x="630" y="836" width="6" height="6" fill="#ffc400"/><rect x="630" y="842" width="6" height="6" fill="#eef048"/><rect x="630" y="860" width="6" height="6" fill="#fff020"/><rect x="630" y="878" width="6" height="6" fill="#ffa010"/><rect x="636" y="650" width="6" height="6" fill="#eef048"/><rect x="636" y="656" width="6" height="6" fill="#ffc400"/><rect x="636" y="662" width="6" height="6" fill="#fff020"/><rect x="636" y="680" width="6" height="6" fill="#fff020"/><rect x="636" y="698" width="6" height="6" fill="#ffa010"/><rect x="636" y="716" width="6" height="6" fill="#eef048"/><rect x="636" y="722" width="6" height="6" fill="#fff020"/><rect x="636" y="740" width="6" height="6" fill="#fff020"/><rect x="636" y="758" width="6" height="6" fill="#fff020"/><rect x="636" y="764" width="6" height="6" fill="#ffa010"/><rect x="636" y="770" width="6" height="6" fill="#fff020"/><rect x="636" y="776" width="6" height="6" fill="#ffa010"/><rect x="636" y="794" width="6" height="6" fill="#ffc400"/><rect x="636" y="806" width="6" height="6" fill="#ffc400"/><rect x="636" y="872" width="6" height="6" fill="#eef048"/><rect x="636" y="878" width="6" height="6" fill="#fff020"/><rect x="642" y="614" width="6" height="6" fill="#ffa010"/><rect x="642" y="638" width="6" height="6" fill="#fff020"/><rect x="642" y="680" width="6" height="6" fill="#ffa010"/><rect x="642" y="686" width="6" height="6" fill="#fff020"/><rect x="642" y="710" width="6" height="6" fill="#ffa010"/><rect x="642" y="722" width="6" height="6" fill="#ffc400"/><rect x="642" y="728" width="6" height="6" fill="#fff020"/><rect x="642" y="734" width="6" height="6" fill="#ffa010"/><rect x="642" y="764" width="6" height="6" fill="#ffa010"/><rect x="642" y="776" width="6" height="6" fill="#ffc400"/><rect x="642" y="818" width="6" height="6" fill="#fff020"/><rect x="642" y="854" width="6" height="6" fill="#fff020"/><rect x="642" y="866" width="6" height="6" fill="#fff020"/><rect x="642" y="872" width="6" height="6" fill="#fff020"/><rect x="648" y="626" width="6" height="6" fill="#fff020"/><rect x="648" y="644" width="6" height="6" fill="#ffa010"/><rect x="648" y="686" width="6" height="6" fill="#fff020"/><rect x="648" y="692" width="6" height="6" fill="#fff020"/><rect x="648" y="698" width="6" height="6" fill="#ffc400"/><rect x="648" y="704" width="6" height="6" fill="#eef048"/><rect x="648" y="716" width="6" height="6" fill="#fff020"/><rect x="648" y="722" width="6" height="6" fill="#ffa010"/><rect x="648" y="734" width="6" height="6" fill="#fff020"/><rect x="648" y="740" width="6" height="6" fill="#fff020"/><rect x="648" y="746" width="6" height="6" fill="#ff8a00"/><rect x="648" y="752" width="6" height="6" fill="#ffa010"/><rect x="648" y="764" width="6" height="6" fill="#fff020"/><rect x="648" y="842" width="6" height="6" fill="#fff020"/><rect x="648" y="878" width="6" height="6" fill="#fff020"/><rect x="654" y="614" width="6" height="6" fill="#fff020"/><rect x="654" y="620" width="6" height="6" fill="#fff020"/><rect x="654" y="626" width="6" height="6" fill="#fff020"/><rect x="654" y="674" width="6" height="6" fill="#fff020"/><rect x="654" y="710" width="6" height="6" fill="#ffa010"/><rect x="654" y="716" width="6" height="6" fill="#fff020"/><rect x="654" y="728" width="6" height="6" fill="#fff020"/><rect x="654" y="746" width="6" height="6" fill="#fff020"/><rect x="654" y="752" width="6" height="6" fill="#ff8a00"/><rect x="654" y="764" width="6" height="6" fill="#fff020"/><rect x="654" y="770" width="6" height="6" fill="#ffa010"/><rect x="654" y="776" width="6" height="6" fill="#ffc400"/><rect x="654" y="782" width="6" height="6" fill="#fff020"/><rect x="654" y="788" width="6" height="6" fill="#fff020"/><rect x="654" y="812" width="6" height="6" fill="#ffc400"/><rect x="654" y="818" width="6" height="6" fill="#ffa010"/><rect x="654" y="830" width="6" height="6" fill="#ffa010"/><rect x="654" y="866" width="6" height="6" fill="#eef048"/><rect x="660" y="620" width="6" height="6" fill="#fff020"/><rect x="660" y="662" width="6" height="6" fill="#fff020"/><rect x="660" y="674" width="6" height="6" fill="#fff020"/><rect x="660" y="680" width="6" height="6" fill="#fff020"/><rect x="660" y="686" width="6" height="6" fill="#ffc400"/><rect x="660" y="692" width="6" height="6" fill="#ff8a00"/><rect x="660" y="710" width="6" height="6" fill="#ffa010"/><rect x="660" y="722" width="6" height="6" fill="#fff020"/><rect x="660" y="728" width="6" height="6" fill="#fff020"/><rect x="660" y="734" width="6" height="6" fill="#fff020"/><rect x="660" y="740" width="6" height="6" fill="#ff8a00"/><rect x="660" y="746" width="6" height="6" fill="#ffc400"/><rect x="660" y="758" width="6" height="6" fill="#fff020"/><rect x="660" y="770" width="6" height="6" fill="#fff020"/><rect x="660" y="788" width="6" height="6" fill="#fff020"/><rect x="660" y="854" width="6" height="6" fill="#fff020"/><rect x="660" y="872" width="6" height="6" fill="#ffc400"/><rect x="666" y="620" width="6" height="6" fill="#ffa010"/><rect x="666" y="626" width="6" height="6" fill="#ffa010"/><rect x="666" y="650" width="6" height="6" fill="#ffc400"/><rect x="666" y="662" width="6" height="6" fill="#fff020"/><rect x="666" y="674" width="6" height="6" fill="#fff020"/><rect x="666" y="692" width="6" height="6" fill="#ffc400"/><rect x="666" y="698" width="6" height="6" fill="#ffc400"/><rect x="666" y="704" width="6" height="6" fill="#ffc400"/><rect x="666" y="710" width="6" height="6" fill="#fff020"/><rect x="666" y="722" width="6" height="6" fill="#fff020"/><rect x="666" y="728" width="6" height="6" fill="#fff020"/><rect x="666" y="734" width="6" height="6" fill="#ffc400"/><rect x="666" y="740" width="6" height="6" fill="#ffc400"/><rect x="666" y="758" width="6" height="6" fill="#fff020"/><rect x="666" y="782" width="6" height="6" fill="#fff020"/><rect x="666" y="788" width="6" height="6" fill="#ffa010"/><rect x="666" y="794" width="6" height="6" fill="#eef048"/><rect x="666" y="806" width="6" height="6" fill="#fff020"/><rect x="666" y="818" width="6" height="6" fill="#fff020"/><rect x="666" y="830" width="6" height="6" fill="#ffa010"/><rect x="666" y="836" width="6" height="6" fill="#eef048"/><rect x="666" y="848" width="6" height="6" fill="#fff020"/><rect x="666" y="872" width="6" height="6" fill="#fff020"/><rect x="666" y="878" width="6" height="6" fill="#eef048"/><rect x="672" y="656" width="6" height="6" fill="#ffc400"/><rect x="672" y="662" width="6" height="6" fill="#ffc400"/><rect x="672" y="680" width="6" height="6" fill="#fff020"/><rect x="672" y="686" width="6" height="6" fill="#ffc400"/><rect x="672" y="692" width="6" height="6" fill="#eef048"/><rect x="672" y="704" width="6" height="6" fill="#fff020"/><rect x="672" y="716" width="6" height="6" fill="#ffc400"/><rect x="672" y="740" width="6" height="6" fill="#ffa010"/><rect x="672" y="776" width="6" height="6" fill="#fff020"/><rect x="672" y="788" width="6" height="6" fill="#fff020"/><rect x="672" y="836" width="6" height="6" fill="#ffa010"/><rect x="672" y="866" width="6" height="6" fill="#eef048"/><rect x="672" y="878" width="6" height="6" fill="#ffa010"/><rect x="678" y="626" width="6" height="6" fill="#ffc400"/><rect x="678" y="644" width="6" height="6" fill="#fff020"/><rect x="678" y="650" width="6" height="6" fill="#fff020"/><rect x="678" y="656" width="6" height="6" fill="#fff020"/><rect x="678" y="668" width="6" height="6" fill="#ffa010"/><rect x="678" y="674" width="6" height="6" fill="#ffa010"/><rect x="678" y="680" width="6" height="6" fill="#eef048"/><rect x="678" y="692" width="6" height="6" fill="#ffc400"/><rect x="678" y="698" width="6" height="6" fill="#fff020"/><rect x="678" y="740" width="6" height="6" fill="#ffc400"/><rect x="678" y="770" width="6" height="6" fill="#ff8a00"/><rect x="678" y="788" width="6" height="6" fill="#ffc400"/><rect x="678" y="794" width="6" height="6" fill="#ffc400"/><rect x="678" y="800" width="6" height="6" fill="#fff020"/><rect x="678" y="812" width="6" height="6" fill="#ffc400"/><rect x="678" y="818" width="6" height="6" fill="#ffc400"/><rect x="678" y="824" width="6" height="6" fill="#ffc400"/><rect x="678" y="830" width="6" height="6" fill="#eef048"/><rect x="678" y="842" width="6" height="6" fill="#ff8a00"/><rect x="678" y="854" width="6" height="6" fill="#fff020"/><rect x="678" y="866" width="6" height="6" fill="#ffa010"/><rect x="678" y="878" width="6" height="6" fill="#fff020"/>
</g>
<rect x="596.4" y="654.2" width="12.0" height="16.0" fill="#000" />
<rect x="546.2" y="764.5" width="12.0" height="10.0" fill="#000" />
<rect x="564.3" y="768.5" width="10.0" height="12.0" fill="#000" />
<rect x="522.2" y="772.5" width="8.0" height="8.0" fill="#000" />
<rect x="524.2" y="784.5" width="6.0" height="6.0" fill="#000" />
<rect x="544.2" y="790.5" width="10.0" height="10.0" fill="#000" />
<rect x="560.3" y="792.5" width="8.0" height="16.0" fill="#000" />
<rect x="546.2" y="806.6" width="8.0" height="4.0" fill="#000" />
<rect x="526.2" y="818.6" width="6.0" height="4.0" fill="#000" />
<rect x="616.4" y="752.4" width="8.0" height="8.0" fill="#000" />
<rect x="610.4" y="706.3" width="4.0" height="4.0" fill="#000" />
<rect x="544.2" y="672.2" width="4.0" height="4.0" fill="#000" />
<rect x="556.3" y="672.2" width="4.0" height="4.0" fill="#000" />
<rect x="1142.6" y="377" width="66.8" height="67.8" rx="7" fill="#263546" stroke="#8b959f" stroke-width="2"/>
<rect x="1216" y="377" width="67" height="67.8" rx="7" fill="#263546" stroke="#8b959f" stroke-width="2"/>
<rect x="1141" y="451.5" width="144" height="3" fill="#c9cdd2" />
<rect x="1173.5" y="461" width="78.8" height="63.700000000000045" rx="7" fill="#263546" stroke="#8b959f" stroke-width="2"/>
<rect x="1173.5" y="526.7" width="78.8" height="63.69999999999993" rx="7" fill="#263546" stroke="#8b959f" stroke-width="2"/>
<rect x="1173.5" y="592.4" width="78.8" height="63.700000000000045" rx="7" fill="#263546" stroke="#8b959f" stroke-width="2"/>
<rect x="1173.5" y="658.1" width="78.8" height="63.69999999999993" rx="7" fill="#263546" stroke="#8b959f" stroke-width="2"/>
<rect x="1173.5" y="723.8" width="78.8" height="63.700000000000045" rx="7" fill="#263546" stroke="#8b959f" stroke-width="2"/>
<rect x="1173.5" y="789.5" width="78.8" height="63.700000000000045" rx="7" fill="#263546" stroke="#8b959f" stroke-width="2"/>
<rect x="1173.5" y="855.2" width="78.8" height="63.69999999999993" rx="7" fill="#263546" stroke="#8b959f" stroke-width="2"/>
<rect x="1173.5" y="920.9" width="78.8" height="63.700000000000045" rx="7" fill="#263546" stroke="#8b959f" stroke-width="2"/>
<path d="M1156.0,432.5 L1167.9,428.7 L1194.6,401.6 L1186.4,393.4 L1159.6,420.6 Z" fill="#ffffff" stroke="#ffffff" stroke-width="1.2" stroke-linejoin="round"/>
<path d="M1191.5,405.5 L1182.4,396.6 M1169.1,428.3 L1160.0,419.3" stroke="#263546" stroke-width="1.3"/>
<g fill="none" stroke="#ffffff" stroke-width="3.6"><circle cx="1238.6" cy="399.7" r="5.2"/><circle cx="1238.6" cy="423.5" r="5.2"/></g>
<path d="M1245.7,420.9 L1271.4,395.5 L1268.6,392.5 L1241.3,416.1 Z M1241.3,406.9 L1268.7,430.0 L1271.3,427.0 L1245.7,402.1 Z" fill="#ffffff"/>
<path d="M1195,509 L1231,479" stroke="#ffffff" stroke-width="3" stroke-linecap="round"/>
<path d="M1194.6,547 C1200,541 1210,540 1213,545 C1215,550 1204,557 1201,562 C1197,569 1200,575 1209,575.5 C1218,576 1226,571 1227.5,565 C1229,560 1229,556 1229,552.5" fill="none" stroke="#ffffff" stroke-width="2.5" stroke-linecap="round"/>
<rect x="1195.5" y="611.5" width="35" height="25" fill="none" stroke="#ffffff" stroke-width="2.8"/>
<rect x="1196" y="677" width="34" height="26.7" fill="#ffffff" />
<circle cx="1213" cy="755" r="20.5" fill="none" stroke="#ffffff" stroke-width="2.6"/>
<circle cx="1213" cy="821.4" r="22" fill="#ffffff"/>
<path d="M1197,870 Q1206,867 1215,869.5 Q1218,876 1217.5,882 Q1229,889 1229.5,899 Q1229,906 1224,907 L1204,907 Q1197,905 1197.5,898 Q1199,892 1199,886 Q1195,878 1197,870 Z" fill="none" stroke="#ffffff" stroke-width="2.6" stroke-linejoin="round"/>
<path d="M1197,934 Q1208,931 1219.5,934 Q1223,941 1221,948 Q1232,953 1231.5,963 Q1231,972 1224,973.5 L1202,973.5 Q1195,971 1195.5,963 Q1196,955 1198.5,948.5 Q1194,943 1197,934 Z" fill="#ffffff"/>
<rect x="1316" y="245" width="9" height="1381" fill="#2c465a" />
<rect x="1316" y="245" width="1.5" height="1381" fill="#335067" />
<rect x="1323.5" y="245" width="1.5" height="1381" fill="#335067" />
<rect x="1319" y="924" width="4" height="5" fill="#e6e9ec" />
<rect x="1319" y="933" width="4" height="5" fill="#e6e9ec" />
<rect x="1319" y="942" width="4" height="5" fill="#e6e9ec" />
<text x="128" y="1280.5" font-size="64" fill="#f0cd1a" textLength="42" lengthAdjust="spacingAndGlyphs" stroke="#f0cd1a" stroke-width="2.4">A</text>
<text x="578.5" y="1279" font-size="64" fill="#f0cd1a" textLength="41" lengthAdjust="spacingAndGlyphs" stroke="#f0cd1a" stroke-width="2.4">B</text>
<text x="1366.5" y="523.5" font-size="64" fill="#f0cd1a" textLength="41" lengthAdjust="spacingAndGlyphs" stroke="#f0cd1a" stroke-width="2.4">C</text>
<text x="1368.5" y="930" font-size="64" fill="#f0cd1a" textLength="43" lengthAdjust="spacingAndGlyphs" stroke="#f0cd1a" stroke-width="2.4">D</text>
<rect x="32" y="1302" width="1043" height="278" rx="8" fill="#2c3d4f"/>
<rect x="128.2" y="1305.7" width="343.2" height="270.6" fill="none" stroke="#f0cd1a" stroke-width="4.5"/>
<text x="266.5" y="1341" font-size="27" fill="#e3e7eb" textLength="59" lengthAdjust="spacingAndGlyphs" >FLIM</text>
<rect x="232.1" y="1357.5" width="126.2" height="96" rx="5" fill="#000" stroke="#ffffff" stroke-width="3"/>
<polygon points="288.2,1388.6 289.0,1388.0 291.8,1388.0 293.5,1388.8 295.4,1389.1 297.1,1389.3 299.3,1390.1 300.2,1390.7 302.6,1390.8 304.3,1392.0 304.5,1393.4 303.6,1394.2 303.0,1395.4 302.7,1396.3 303.6,1397.6 305.0,1398.4 305.5,1396.5 306.7,1395.4 307.4,1398.3 308.4,1400.7 309.0,1402.6 308.8,1406.5 306.9,1408.2 302.6,1408.6 306.4,1407.0 306.2,1405.1 306.9,1402.6 304.8,1400.2 303.6,1399.7 302.4,1400.0 301.9,1401.4 301.4,1404.1 300.2,1406.3 299.3,1408.4 299.3,1411.1 297.1,1411.1 295.9,1412.3 295.4,1414.2 294.2,1416.7 290.6,1416.9 288.0,1416.2 288.2,1414.7 289.2,1412.3 289.9,1409.9 290.6,1407.5 291.1,1405.1 291.6,1402.6 291.6,1398.3 291.4,1395.9 290.2,1391.8" fill="#f7d400"/><polygon points="303.6,1412.3 305.0,1411.3 307.4,1411.1 311.0,1411.6 310.0,1413.5 309.6,1415.5 308.8,1417.4 306.9,1418.0 305.0,1417.8 304.3,1415.9 304.1,1413.8" fill="#f7d400"/>
<rect x="579.2" y="1304.2" width="473.6" height="271.6" fill="none" stroke="#f0cd1a" stroke-width="4.5"/>
<text x="780" y="1342" font-size="27" fill="#e3e7eb" textLength="63" lengthAdjust="spacingAndGlyphs" >Stack</text>
<defs><filter id="blur2" x="-50%" y="-50%" width="200%" height="200%"><feGaussianBlur stdDeviation="1.5"/></filter></defs>
<rect x="604.7" y="1358.7" width="125.2" height="92" fill="#030405" />
<g filter="url(#blur2)" opacity="0.95"><polygon points="656.0,1380.5 656.8,1379.7 660.2,1379.7 662.2,1380.8 664.4,1381.2 666.4,1381.5 668.9,1382.4 670.0,1383.2 672.9,1383.4 674.8,1385.0 675.1,1387.0 674.0,1387.9 673.3,1389.5 673.0,1390.8 674.0,1392.4 675.7,1393.6 676.2,1391.0 677.6,1389.5 678.5,1393.4 679.6,1396.6 680.3,1399.2 680.2,1404.4 677.9,1406.6 672.9,1407.1 677.4,1405.0 677.1,1402.4 677.9,1399.2 675.4,1396.0 674.0,1395.3 672.6,1395.7 672.0,1397.6 671.5,1401.2 670.0,1404.1 668.9,1407.0 668.9,1410.5 666.4,1410.5 665.0,1412.1 664.4,1414.7 663.0,1417.9 658.8,1418.2 655.7,1417.3 656.0,1415.3 657.1,1412.1 658.0,1408.9 658.8,1405.7 659.4,1402.4 659.9,1399.2 659.9,1393.4 659.6,1390.2 658.2,1384.7" fill="rgb(200,200,200)"/><polygon points="674.0,1412.1 675.7,1410.8 678.5,1410.5 682.7,1411.2 681.6,1413.7 681.0,1416.3 680.2,1418.9 677.9,1419.7 675.7,1419.4 674.8,1417.0 674.5,1414.1" fill="rgb(200,200,200)"/></g>
<rect x="749" y="1358.7" width="125.2" height="92" fill="#030405" />
<g filter="url(#blur2)" opacity="0.95"><polygon points="800.3,1380.5 801.1,1379.7 804.5,1379.7 806.5,1380.8 808.7,1381.2 810.7,1381.5 813.2,1382.4 814.3,1383.2 817.2,1383.4 819.1,1385.0 819.4,1387.0 818.3,1387.9 817.6,1389.5 817.3,1390.8 818.3,1392.4 820.0,1393.6 820.5,1391.0 821.9,1389.5 822.8,1393.4 823.9,1396.6 824.6,1399.2 824.5,1404.4 822.2,1406.6 817.2,1407.1 821.7,1405.0 821.4,1402.4 822.2,1399.2 819.7,1396.0 818.3,1395.3 816.9,1395.7 816.3,1397.6 815.8,1401.2 814.3,1404.1 813.2,1407.0 813.2,1410.5 810.7,1410.5 809.3,1412.1 808.7,1414.7 807.3,1417.9 803.1,1418.2 800.0,1417.3 800.3,1415.3 801.4,1412.1 802.2,1408.9 803.1,1405.7 803.7,1402.4 804.2,1399.2 804.2,1393.4 803.9,1390.2 802.5,1384.7" fill="rgb(191,191,191)"/><polygon points="818.3,1412.1 820.0,1410.8 822.8,1410.5 827.0,1411.2 825.9,1413.7 825.3,1416.3 824.5,1418.9 822.2,1419.7 820.0,1419.4 819.1,1417.0 818.8,1414.1" fill="rgb(191,191,191)"/></g>
<rect x="893" y="1358.7" width="125.2" height="92" fill="#030405" />
<g filter="url(#blur2)" opacity="0.95"><polygon points="944.3,1380.5 945.1,1379.7 948.5,1379.7 950.5,1380.8 952.7,1381.2 954.7,1381.5 957.2,1382.4 958.3,1383.2 961.2,1383.4 963.1,1385.0 963.4,1387.0 962.3,1387.9 961.6,1389.5 961.3,1390.8 962.3,1392.4 964.0,1393.6 964.5,1391.0 965.9,1389.5 966.8,1393.4 967.9,1396.6 968.6,1399.2 968.5,1404.4 966.2,1406.6 961.2,1407.1 965.7,1405.0 965.4,1402.4 966.2,1399.2 963.7,1396.0 962.3,1395.3 960.9,1395.7 960.3,1397.6 959.8,1401.2 958.3,1404.1 957.2,1407.0 957.2,1410.5 954.7,1410.5 953.3,1412.1 952.7,1414.7 951.3,1417.9 947.1,1418.2 944.0,1417.3 944.3,1415.3 945.4,1412.1 946.2,1408.9 947.1,1405.7 947.7,1402.4 948.2,1399.2 948.2,1393.4 947.9,1390.2 946.5,1384.7" fill="rgb(99,99,99)"/><polygon points="962.3,1412.1 964.0,1410.8 966.8,1410.5 971.0,1411.2 969.9,1413.7 969.3,1416.3 968.5,1418.9 966.2,1419.7 964.0,1419.4 963.1,1417.0 962.8,1414.1" fill="rgb(99,99,99)"/></g>
<rect x="676.7" y="1471" width="125.2" height="92" fill="#030405" />
<g filter="url(#blur2)" opacity="0.95"><polygon points="728.0,1492.8 728.8,1492.0 732.2,1492.0 734.2,1493.1 736.4,1493.5 738.4,1493.8 740.9,1494.7 742.0,1495.5 744.9,1495.7 746.8,1497.3 747.1,1499.3 746.0,1500.2 745.3,1501.8 745.0,1503.1 746.0,1504.7 747.7,1505.9 748.2,1503.3 749.6,1501.8 750.5,1505.7 751.6,1508.9 752.3,1511.5 752.2,1516.7 749.9,1518.9 744.9,1519.4 749.4,1517.3 749.1,1514.7 749.9,1511.5 747.4,1508.3 746.0,1507.6 744.6,1508.0 744.0,1509.9 743.5,1513.5 742.0,1516.4 740.9,1519.3 740.9,1522.8 738.4,1522.8 737.0,1524.4 736.4,1527.0 735.0,1530.2 730.8,1530.5 727.7,1529.6 728.0,1527.6 729.1,1524.4 730.0,1521.2 730.8,1518.0 731.4,1514.7 731.9,1511.5 731.9,1505.7 731.6,1502.5 730.2,1497.0" fill="rgb(39,39,39)"/><polygon points="746.0,1524.4 747.7,1523.1 750.5,1522.8 754.7,1523.5 753.6,1526.0 753.0,1528.6 752.2,1531.2 749.9,1532.0 747.7,1531.7 746.8,1529.3 746.5,1526.4" fill="rgb(39,39,39)"/></g>
<rect x="820.7" y="1471" width="125.2" height="92" fill="#030405" />
<g filter="url(#blur2)" opacity="0.95"><polygon points="872.0,1492.8 872.8,1492.0 876.2,1492.0 878.2,1493.1 880.4,1493.5 882.4,1493.8 884.9,1494.7 886.0,1495.5 888.9,1495.7 890.8,1497.3 891.1,1499.3 890.0,1500.2 889.3,1501.8 889.0,1503.1 890.0,1504.7 891.7,1505.9 892.2,1503.3 893.6,1501.8 894.5,1505.7 895.6,1508.9 896.3,1511.5 896.2,1516.7 893.9,1518.9 888.9,1519.4 893.4,1517.3 893.1,1514.7 893.9,1511.5 891.4,1508.3 890.0,1507.6 888.6,1508.0 888.0,1509.9 887.5,1513.5 886.0,1516.4 884.9,1519.3 884.9,1522.8 882.4,1522.8 881.0,1524.4 880.4,1527.0 879.0,1530.2 874.8,1530.5 871.7,1529.6 872.0,1527.6 873.1,1524.4 874.0,1521.2 874.8,1518.0 875.4,1514.7 875.9,1511.5 875.9,1505.7 875.6,1502.5 874.2,1497.0" fill="rgb(27,27,27)"/><polygon points="890.0,1524.4 891.7,1523.1 894.5,1522.8 898.7,1523.5 897.6,1526.0 897.0,1528.6 896.2,1531.2 893.9,1532.0 891.7,1531.7 890.8,1529.3 890.5,1526.4" fill="rgb(27,27,27)"/></g>
<rect x="1386.4" y="279.4" width="1542.6" height="69.8" fill="#30465a" />
<path d="M1424,306 L1435,315 L1424,324" fill="none" stroke="#d5dae0" stroke-width="3"/>
<text x="1457" y="326.4" font-size="33.5" fill="#ffffff" font-weight="700" textLength="87" lengthAdjust="spacingAndGlyphs" >Filters</text>
<rect x="1386.4" y="362" width="1542.6" height="107.6" fill="#30465a" />
<rect x="1386.4" y="362" width="245.1" height="107.6" fill="#1b2530" />
<text x="1413" y="430" font-size="32" fill="#ffffff" font-weight="700" textLength="92" lengthAdjust="spacingAndGlyphs" >Charts</text>
<path d="M1554.2,400.7 L1555.0,396.3 L1565.0,396.3 L1565.8,400.7 L1570.8,403.6 L1575.0,402.0 L1580.0,410.8 L1576.5,413.6 L1576.5,419.4 L1580.0,422.2 L1575.0,431.0 L1570.8,429.4 L1565.8,432.3 L1565.0,436.7 L1555.0,436.7 L1554.2,432.3 L1549.2,429.4 L1545.0,431.0 L1540.0,422.2 L1543.5,419.4 L1543.5,413.6 L1540.0,410.8 L1545.0,402.0 L1549.2,403.6 Z M1566.2,416.5 A6.2,6.2 0 1 0 1553.8,416.5 A6.2,6.2 0 1 0 1566.2,416.5 Z" fill="#b8bdc3" fill-rule="evenodd"/>
<text x="1684" y="431.6" font-size="29.5" fill="#dde2e7" textLength="144" lengthAdjust="spacingAndGlyphs" >Sequence 1</text>
<rect x="1419.65" y="473.25" width="1516.8" height="398" fill="none" stroke="#f0cd1a" stroke-width="4.5"/>
<text x="2062.5" y="508.7" font-size="28" fill="#e6e9ec" textLength="190" lengthAdjust="spacingAndGlyphs" >Stack evolution</text>
<path d="M1515.2,767.2 H2898.5 M1515.2,712.2 H2898.5 M1515.2,657.1 H2898.5 M1515.2,602.0 H2898.5 M1515.2,547.0 H2898.5 M1601.7,538 V767.2 M1688.1,538 V767.2 M1774.6,538 V767.2 M1861.0,538 V767.2 M1947.5,538 V767.2 M2033.9,538 V767.2 M2120.4,538 V767.2 M2206.8,538 V767.2 M2293.3,538 V767.2 M2379.8,538 V767.2 M2466.2,538 V767.2 M2552.7,538 V767.2 M2639.1,538 V767.2 M2725.6,538 V767.2 M2812.0,538 V767.2 M2898.5,538 V767.2" stroke="#b4bbc2" stroke-width="1.4" stroke-dasharray="8,6" fill="none"/>
<path d="M1514.3,537 V773" stroke="#d8dce0" stroke-width="2.2"/>
<path d="M1514,772.7 H1521 M1502,767.2 H1514 M1514,761.7 H1521 M1514,756.2 H1521 M1514,750.7 H1521 M1514,745.2 H1521 M1514,739.7 H1521 M1514,734.2 H1521 M1514,728.7 H1521 M1514,723.2 H1521 M1514,717.7 H1521 M1502,712.2 H1514 M1514,706.6 H1521 M1514,701.1 H1521 M1514,695.6 H1521 M1514,690.1 H1521 M1514,684.6 H1521 M1514,679.1 H1521 M1514,673.6 H1521 M1514,668.1 H1521 M1514,662.6 H1521 M1502,657.1 H1514 M1514,651.6 H1521 M1514,646.1 H1521 M1514,640.6 H1521 M1514,635.1 H1521 M1514,629.6 H1521 M1514,624.1 H1521 M1514,618.6 H1521 M1514,613.1 H1521 M1514,607.6 H1521 M1502,602.0 H1514 M1514,596.5 H1521 M1514,591.0 H1521 M1514,585.5 H1521 M1514,580.0 H1521 M1514,574.5 H1521 M1514,569.0 H1521 M1514,563.5 H1521 M1514,558.0 H1521 M1514,552.5 H1521 M1502,547.0 H1514 M1514,541.5 H1521" stroke="#d8dce0" stroke-width="1.6"/>
<text x="1497" y="774.7" font-size="21" fill="#e3e6e9" text-anchor="end" textLength="35" lengthAdjust="spacingAndGlyphs" >200</text>
<text x="1497" y="719.6500000000001" font-size="21" fill="#e3e6e9" text-anchor="end" textLength="35" lengthAdjust="spacingAndGlyphs" >250</text>
<text x="1497" y="664.6" font-size="21" fill="#e3e6e9" text-anchor="end" textLength="35" lengthAdjust="spacingAndGlyphs" >300</text>
<text x="1497" y="609.55" font-size="21" fill="#e3e6e9" text-anchor="end" textLength="35" lengthAdjust="spacingAndGlyphs" >350</text>
<text x="1497" y="554.5" font-size="21" fill="#e3e6e9" text-anchor="end" textLength="35" lengthAdjust="spacingAndGlyphs" >400</text>
<path d="M1515,783.4 H2899" stroke="#d8dce0" stroke-width="2.2"/>
<path d="M1515.2,783 V795 M1523.8,783 V791 M1532.5,783 V791 M1541.1,783 V791 M1549.8,783 V791 M1558.4,783 V791 M1567.1,783 V791 M1575.7,783 V791 M1584.4,783 V791 M1593.0,783 V791 M1601.7,783 V795 M1610.3,783 V791 M1618.9,783 V791 M1627.6,783 V791 M1636.2,783 V791 M1644.9,783 V791 M1653.5,783 V791 M1662.2,783 V791 M1670.8,783 V791 M1679.5,783 V791 M1688.1,783 V795 M1696.8,783 V791 M1705.4,783 V791 M1714.0,783 V791 M1722.7,783 V791 M1731.3,783 V791 M1740.0,783 V791 M1748.6,783 V791 M1757.3,783 V791 M1765.9,783 V791 M1774.6,783 V795 M1783.2,783 V791 M1791.9,783 V791 M1800.5,783 V791 M1809.2,783 V791 M1817.8,783 V791 M1826.4,783 V791 M1835.1,783 V791 M1843.7,783 V791 M1852.4,783 V791 M1861.0,783 V795 M1869.7,783 V791 M1878.3,783 V791 M1887.0,783 V791 M1895.6,783 V791 M1904.3,783 V791 M1912.9,783 V791 M1921.5,783 V791 M1930.2,783 V791 M1938.8,783 V791 M1947.5,783 V795 M1956.1,783 V791 M1964.8,783 V791 M1973.4,783 V791 M1982.1,783 V791 M1990.7,783 V791 M1999.4,783 V791 M2008.0,783 V791 M2016.6,783 V791 M2025.3,783 V791 M2033.9,783 V795 M2042.6,783 V791 M2051.2,783 V791 M2059.9,783 V791 M2068.5,783 V791 M2077.2,783 V791 M2085.8,783 V791 M2094.5,783 V791 M2103.1,783 V791 M2111.7,783 V791 M2120.4,783 V795 M2129.0,783 V791 M2137.7,783 V791 M2146.3,783 V791 M2155.0,783 V791 M2163.6,783 V791 M2172.3,783 V791 M2180.9,783 V791 M2189.6,783 V791 M2198.2,783 V791 M2206.8,783 V795 M2215.5,783 V791 M2224.1,783 V791 M2232.8,783 V791 M2241.4,783 V791 M2250.1,783 V791 M2258.7,783 V791 M2267.4,783 V791 M2276.0,783 V791 M2284.7,783 V791 M2293.3,783 V795 M2302.0,783 V791 M2310.6,783 V791 M2319.2,783 V791 M2327.9,783 V791 M2336.5,783 V791 M2345.2,783 V791 M2353.8,783 V791 M2362.5,783 V791 M2371.1,783 V791 M2379.8,783 V795 M2388.4,783 V791 M2397.1,783 V791 M2405.7,783 V791 M2414.3,783 V791 M2423.0,783 V791 M2431.6,783 V791 M2440.3,783 V791 M2448.9,783 V791 M2457.6,783 V791 M2466.2,783 V795 M2474.9,783 V791 M2483.5,783 V791 M2492.2,783 V791 M2500.8,783 V791 M2509.4,783 V791 M2518.1,783 V791 M2526.7,783 V791 M2535.4,783 V791 M2544.0,783 V791 M2552.7,783 V795 M2561.3,783 V791 M2570.0,783 V791 M2578.6,783 V791 M2587.3,783 V791 M2595.9,783 V791 M2604.5,783 V791 M2613.2,783 V791 M2621.8,783 V791 M2630.5,783 V791 M2639.1,783 V795 M2647.8,783 V791 M2656.4,783 V791 M2665.1,783 V791 M2673.7,783 V791 M2682.4,783 V791 M2691.0,783 V791 M2699.7,783 V791 M2708.3,783 V791 M2716.9,783 V791 M2725.6,783 V795 M2734.2,783 V791 M2742.9,783 V791 M2751.5,783 V791 M2760.2,783 V791 M2768.8,783 V791 M2777.5,783 V791 M2786.1,783 V791 M2794.8,783 V791 M2803.4,783 V791 M2812.0,783 V795 M2820.7,783 V791 M2829.3,783 V791 M2838.0,783 V791 M2846.6,783 V791 M2855.3,783 V791 M2863.9,783 V791 M2872.6,783 V791 M2881.2,783 V791 M2889.9,783 V791 M2898.5,783 V795" stroke="#d8dce0" stroke-width="1.6"/>
<text x="1525.2" y="819.5" font-size="21" fill="#e3e6e9" text-anchor="middle" >0</text>
<text x="1604.65625" y="819.5" font-size="21" fill="#e3e6e9" text-anchor="middle" >500</text>
<text x="1691.1125" y="819.5" font-size="21" fill="#e3e6e9" text-anchor="middle" >1000</text>
<text x="1777.56875" y="819.5" font-size="21" fill="#e3e6e9" text-anchor="middle" >1500</text>
<text x="1864.025" y="819.5" font-size="21" fill="#e3e6e9" text-anchor="middle" >2000</text>
<text x="1950.48125" y="819.5" font-size="21" fill="#e3e6e9" text-anchor="middle" >2500</text>
<text x="2036.9375" y="819.5" font-size="21" fill="#e3e6e9" text-anchor="middle" >3000</text>
<text x="2123.39375" y="819.5" font-size="21" fill="#e3e6e9" text-anchor="middle" >3500</text>
<text x="2209.85" y="819.5" font-size="21" fill="#e3e6e9" text-anchor="middle" >4000</text>
<text x="2296.30625" y="819.5" font-size="21" fill="#e3e6e9" text-anchor="middle" >4500</text>
<text x="2382.7625" y="819.5" font-size="21" fill="#e3e6e9" text-anchor="middle" >5000</text>
<text x="2469.21875" y="819.5" font-size="21" fill="#e3e6e9" text-anchor="middle" >5500</text>
<text x="2555.675" y="819.5" font-size="21" fill="#e3e6e9" text-anchor="middle" >6000</text>
<text x="2642.1312500000004" y="819.5" font-size="21" fill="#e3e6e9" text-anchor="middle" >6500</text>
<text x="2728.5875" y="819.5" font-size="21" fill="#e3e6e9" text-anchor="middle" >7000</text>
<text x="2815.04375" y="819.5" font-size="21" fill="#e3e6e9" text-anchor="middle" >7500</text>
<text x="2901.5" y="819.5" font-size="21" fill="#e3e6e9" text-anchor="middle" >8000</text>
<text x="2154.5" y="856.6" font-size="26" fill="#e6e9ec" textLength="101" lengthAdjust="spacingAndGlyphs" >Time (ps)</text>
<text x="0" y="0" font-size="22" fill="#dfe3e7" textLength="94" lengthAdjust="spacingAndGlyphs" transform="translate(1448,702) rotate(-90)" font-family='"Liberation Sans", sans-serif'>Intensity</text>
<path d="M1515.2,538.6 L1601.7,573.5 L1688.1,608.0 L1774.6,643.6 L1861.0,678.0 L1947.5,694.8 L2033.9,710.8 L2120.4,727.3 L2206.8,743.6 L2293.3,749.1 L2379.8,753.5 L2466.2,757.8 L2552.7,763.3 L2639.1,766.1 L2725.6,767.4 L2812.0,769.6 L2898.5,771.2" fill="none" stroke="#1cb2c2" stroke-width="2.6"/>
<rect x="1419.65" y="879.85" width="1516.8" height="697.5" fill="none" stroke="#f0cd1a" stroke-width="4.5"/>
<text x="2021.5" y="917" font-size="28" fill="#e6e9ec" textLength="272" lengthAdjust="spacingAndGlyphs" >Lifetime histogramme</text>
<path d="M1594.2,1476.4 V1476.4 H1599.2 V1476.4 H1604.2 V1476.4 H1609.2 V1476.4 H1614.2 V1476.4 H1619.2 V1476.4 H1624.2 V1476.4 H1629.3 V1476.4 H1634.3 V1476.4 H1639.3 V1476.4 H1644.3 V1476.4 H1649.3 V1476.4 H1654.3 V1476.4 H1659.3 V1476.4 H1664.3 V1476.4 H1669.3 V1476.4 H1674.4 V1476.4 H1679.4 V1476.4 H1684.4 V1476.4 H1689.4 V1475.2 H1694.4 V1475.2 H1699.4 V1475.2 H1704.4 V1475.2 H1709.4 V1475.2 H1714.4 V1476.4 H1719.5 V1476.4 H1724.5 V1475.2 H1729.5 V1475.2 H1734.5 V1475.2 H1739.5 V1475.2 H1744.5 V1475.8 H1749.5 V1476.4 H1754.5 V1476.4 H1759.5 V1476.4 H1764.5 V1475.2 H1769.6 V1475.2 H1774.6 V1475.2 H1779.6 V1475.2 H1784.6 V1475.8 H1789.6 V1476.4 H1794.6 V1475.2 H1799.6 V1475.2 H1804.6 V1474.0 H1809.6 V1474.0 H1814.7 V1474.6 H1819.7 V1474.6 H1824.7 V1474.6 H1829.7 V1474.0 H1834.7 V1472.8 H1839.7 V1469.1 H1844.7 V1470.3 H1849.7 V1469.7 H1854.7 V1470.3 H1859.8 V1471.6 H1864.8 V1474.0 H1869.8 V1471.0 H1874.8 V1466.7 H1879.8 V1463.1 H1884.8 V1458.2 H1889.8 V1455.8 H1894.8 V1454.0 H1899.8 V1456.4 H1904.9 V1454.6 H1909.9 V1454.6 H1914.9 V1449.2 H1919.9 V1446.7 H1924.9 V1440.7 H1929.9 V1436.5 H1934.9 V1430.4 H1939.9 V1425.0 H1944.9 V1420.7 H1950.0 V1421.9 H1955.0 V1420.1 H1960.0 V1421.3 H1965.0 V1429.2 H1970.0 V1429.2 H1975.0 V1423.1 H1980.0 V1418.9 H1985.0 V1414.1 H1990.0 V1412.9 H1995.1 V1408.0 H2000.1 V1400.7 H2005.1 V1384.8 H2010.1 V1359.9 H2015.1 V1330.2 H2020.1 V1316.3 H2025.1 V1315.2 H2030.1 V1322.5 H2035.1 V1328.2 H2040.2 V1317.3 H2045.2 V1314.4 H2050.2 V1303.9 H2055.2 V1292.4 H2060.2 V1308.2 H2065.2 V1321.5 H2070.2 V1311.2 H2075.2 V1306.9 H2080.2 V1301.5 H2085.3 V1269.4 H2090.3 V1252.5 H2095.3 V1257.9 H2100.3 V1267.6 H2105.3 V1248.8 H2110.3 V1262.8 H2115.3 V1251.3 H2120.3 V1221.5 H2125.3 V1184.2 H2130.4 V1179.4 H2135.4 V1146.7 H2140.4 V1111.7 H2145.4 V1115.2 H2150.4 V1114.6 H2155.4 V1106.1 H2160.4 V1132.8 H2165.4 V1138.1 H2170.4 V1131.4 H2175.5 V1122.4 H2180.5 V1112.1 H2185.5 V1097.5 H2190.5 V1109.6 H2195.5 V1104.8 H2200.5 V1120.5 H2205.5 V1121.1 H2210.5 V1112.1 H2215.5 V1096.3 H2220.6 V1077.0 H2225.6 V1064.9 H2230.6 V1057.0 H2235.6 V1055.8 H2240.6 V1061.2 H2245.6 V1070.3 H2250.6 V1053.4 H2255.6 V1059.4 H2260.6 V1057.0 H2265.7 V1076.4 H2270.7 V1090.9 H2275.7 V1106.0 H2280.7 V1114.5 H2285.7 V1123.0 H2290.7 V1115.7 H2295.7 V1113.3 H2300.7 V1139.9 H2305.7 V1152.0 H2310.7 V1139.3 H2315.8 V1165.9 H2320.8 V1161.1 H2325.8 V1138.7 H2330.8 V1169.0 H2335.8 V1169.0 H2340.8 V1154.4 H2345.8 V1158.7 H2350.8 V1184.7 H2355.8 V1182.9 H2360.9 V1196.2 H2365.9 V1228.3 H2370.9 V1231.9 H2375.9 V1228.9 H2380.9 V1225.2 H2385.9 V1230.7 H2390.9 V1253.1 H2395.9 V1285.0 H2400.9 V1297.4 H2406.0 V1317.4 H2411.0 V1318.0 H2416.0 V1301.6 H2421.0 V1290.0 H2426.0 V1300.9 H2431.0 V1307.5 H2436.0 V1313.0 H2441.0 V1326.3 H2446.0 V1342.6 H2451.1 V1346.9 H2456.1 V1344.5 H2461.1 V1356.0 H2466.1 V1374.1 H2471.1 V1386.2 H2476.1 V1383.2 H2481.1 V1388.0 H2486.1 V1398.3 H2491.1 V1389.3 H2496.2 V1386.8 H2501.2 V1391.7 H2506.2 V1397.1 H2511.2 V1404.4 H2516.2 V1404.4 H2521.2 V1408.0 H2526.2 V1409.2 H2531.2 V1410.4 H2536.2 V1409.2 H2541.3 V1421.3 H2546.3 V1418.9 H2551.3 V1431.0 H2556.3 V1434.6 H2561.3 V1435.2 H2566.3 V1426.8 H2571.3 V1431.0 H2576.3 V1428.6 H2581.3 V1425.0 H2586.4 V1429.8 H2591.4 V1437.1 H2596.4 V1448.0 H2601.4 V1442.5 H2606.4 V1448.0 H2611.4 V1442.5 H2616.4 V1440.1 H2621.4 V1438.9 H2626.4 V1445.5 H2631.5 V1439.5 H2636.5 V1441.9 H2641.5 V1441.9 H2646.5 V1443.7 H2651.5 V1449.8 H2656.5 V1456.4 H2661.5 V1460.7 H2666.5 V1463.7 H2671.5 V1466.1 H2676.6 V1467.3 H2681.6 V1469.7 H2686.6 V1468.5 H2691.6 V1466.7 H2696.6 V1463.1 H2701.6 V1464.9 H2706.6 V1463.7 H2711.6 V1466.1 H2716.6 V1471.6 H2721.7 V1473.4 H2726.7 V1474.6 H2731.7 V1476.4 H2736.7 V1476.4 H2741.7 V1476.4 H2746.7 V1476.4 H2751.7 V1474.6 H2756.7 V1473.4 H2761.7 V1473.4 H2766.8 V1473.4 H2771.8 V1473.4 H2776.8 V1475.8 H2781.8 V1476.4 H2786.8 V1476.4 H2791.8 V1476.4 H2796.8 V1476.4 H2801.8 V1476.4 H2806.8 V1476.4 H2811.8 V1476.4 H2816.9 V1476.4 H2821.9 V1476.4 H2826.9 V1476.4 H2831.9 V1476.4 H2836.9 V1476.4 H2841.9 V1476.4 H2846.9 V1476.4 H2851.9 V1476.4 H2856.9 V1476.4 H2862.0 V1476.4 H2867.0 V1476.4 H2872.0 V1476.4 Z" fill="#1f4f63"/>
<path d="M1514.0,1422.2 H2892.0 M1514.0,1367.9 H2892.0 M1514.0,1313.7 H2892.0 M1514.0,1259.4 H2892.0 M1514.0,1205.2 H2892.0 M1514.0,1151.0 H2892.0 M1514.0,1096.7 H2892.0 M1514.0,1042.5 H2892.0 M1514.0,988.2 H2892.0 M1514.0,934.0 H2892.0 M1639.3,934.0 V1476 M1764.5,934.0 V1476 M1889.8,934.0 V1476 M2015.1,934.0 V1476 M2140.4,934.0 V1476 M2265.7,934.0 V1476 M2390.9,934.0 V1476 M2516.2,934.0 V1476 M2641.5,934.0 V1476 M2766.8,934.0 V1476 M2892.0,934.0 V1476" stroke="#8794a0" stroke-width="2" stroke-dasharray="7,2.3" fill="none"/>
<path d="M1500,1476.4 H1514 M1505,1465.6 H1514 M1505,1454.7 H1514 M1505,1443.9 H1514 M1505,1433.0 H1514 M1500,1422.2 H1514 M1505,1411.3 H1514 M1505,1400.5 H1514 M1505,1389.6 H1514 M1505,1378.8 H1514 M1500,1367.9 H1514 M1505,1357.1 H1514 M1505,1346.2 H1514 M1505,1335.4 H1514 M1505,1324.5 H1514 M1500,1313.7 H1514 M1505,1302.8 H1514 M1505,1292.0 H1514 M1505,1281.1 H1514 M1505,1270.3 H1514 M1500,1259.4 H1514 M1505,1248.6 H1514 M1505,1237.7 H1514 M1505,1226.9 H1514 M1505,1216.0 H1514 M1500,1205.2 H1514 M1505,1194.4 H1514 M1505,1183.5 H1514 M1505,1172.7 H1514 M1505,1161.8 H1514 M1500,1151.0 H1514 M1505,1140.1 H1514 M1505,1129.3 H1514 M1505,1118.4 H1514 M1505,1107.6 H1514 M1500,1096.7 H1514 M1505,1085.9 H1514 M1505,1075.0 H1514 M1505,1064.2 H1514 M1505,1053.3 H1514 M1500,1042.5 H1514 M1505,1031.6 H1514 M1505,1020.8 H1514 M1505,1009.9 H1514 M1505,999.1 H1514 M1500,988.2 H1514 M1505,977.4 H1514 M1505,966.5 H1514 M1505,955.7 H1514 M1505,944.8 H1514 M1500,934.0 H1514" stroke="#d8dce0" stroke-width="1.8"/>
<path d="M1514.3,933 V1477.5" stroke="#d8dce0" stroke-width="2.2"/>
<text x="1497" y="1483.8000000000002" font-size="21" fill="#e3e6e9" text-anchor="end" textLength="11.5" lengthAdjust="spacingAndGlyphs" >0</text>
<text x="1497" y="1429.5600000000002" font-size="21" fill="#e3e6e9" text-anchor="end" textLength="11.5" lengthAdjust="spacingAndGlyphs" >5</text>
<text x="1497" y="1375.3200000000002" font-size="21" fill="#e3e6e9" text-anchor="end" textLength="23" lengthAdjust="spacingAndGlyphs" >10</text>
<text x="1497" y="1321.0800000000002" font-size="21" fill="#e3e6e9" text-anchor="end" textLength="23" lengthAdjust="spacingAndGlyphs" >15</text>
<text x="1497" y="1266.8400000000001" font-size="21" fill="#e3e6e9" text-anchor="end" textLength="23" lengthAdjust="spacingAndGlyphs" >20</text>
<text x="1497" y="1212.6000000000001" font-size="21" fill="#e3e6e9" text-anchor="end" textLength="23" lengthAdjust="spacingAndGlyphs" >25</text>
<text x="1497" y="1158.3600000000001" font-size="21" fill="#e3e6e9" text-anchor="end" textLength="23" lengthAdjust="spacingAndGlyphs" >30</text>
<text x="1497" y="1104.1200000000001" font-size="21" fill="#e3e6e9" text-anchor="end" textLength="23" lengthAdjust="spacingAndGlyphs" >35</text>
<text x="1497" y="1049.88" font-size="21" fill="#e3e6e9" text-anchor="end" textLength="23" lengthAdjust="spacingAndGlyphs" >40</text>
<text x="1497" y="995.64" font-size="21" fill="#e3e6e9" text-anchor="end" textLength="23" lengthAdjust="spacingAndGlyphs" >45</text>
<text x="1497" y="941.4" font-size="21" fill="#e3e6e9" text-anchor="end" textLength="23" lengthAdjust="spacingAndGlyphs" >50</text>
<path d="M1514,1476.6 H2893.0" stroke="#d8dce0" stroke-width="2.2"/>
<path d="M1514.0,1476 V1489 M1539.1,1476 V1485 M1564.1,1476 V1485 M1589.2,1476 V1485 M1614.2,1476 V1485 M1639.3,1476 V1489 M1664.3,1476 V1485 M1689.4,1476 V1485 M1714.4,1476 V1485 M1739.5,1476 V1485 M1764.5,1476 V1489 M1789.6,1476 V1485 M1814.7,1476 V1485 M1839.7,1476 V1485 M1864.8,1476 V1485 M1889.8,1476 V1489 M1914.9,1476 V1485 M1939.9,1476 V1485 M1965.0,1476 V1485 M1990.0,1476 V1485 M2015.1,1476 V1489 M2040.2,1476 V1485 M2065.2,1476 V1485 M2090.3,1476 V1485 M2115.3,1476 V1485 M2140.4,1476 V1489 M2165.4,1476 V1485 M2190.5,1476 V1485 M2215.5,1476 V1485 M2240.6,1476 V1485 M2265.7,1476 V1489 M2290.7,1476 V1485 M2315.8,1476 V1485 M2340.8,1476 V1485 M2365.9,1476 V1485 M2390.9,1476 V1489 M2416.0,1476 V1485 M2441.0,1476 V1485 M2466.1,1476 V1485 M2491.1,1476 V1485 M2516.2,1476 V1489 M2541.3,1476 V1485 M2566.3,1476 V1485 M2591.4,1476 V1485 M2616.4,1476 V1485 M2641.5,1476 V1489 M2666.5,1476 V1485 M2691.6,1476 V1485 M2716.6,1476 V1485 M2741.7,1476 V1485 M2766.8,1476 V1489 M2791.8,1476 V1485 M2816.9,1476 V1485 M2841.9,1476 V1485 M2867.0,1476 V1485 M2892.0,1476 V1489" stroke="#d8dce0" stroke-width="1.8"/>
<text x="1514.5" y="1513" font-size="21" fill="#e3e6e9" text-anchor="middle" textLength="45" lengthAdjust="spacingAndGlyphs" >1900</text>
<text x="1639.775" y="1513" font-size="21" fill="#e3e6e9" text-anchor="middle" textLength="45" lengthAdjust="spacingAndGlyphs" >1950</text>
<text x="1765.05" y="1513" font-size="21" fill="#e3e6e9" text-anchor="middle" textLength="45" lengthAdjust="spacingAndGlyphs" >2000</text>
<text x="1890.325" y="1513" font-size="21" fill="#e3e6e9" text-anchor="middle" textLength="45" lengthAdjust="spacingAndGlyphs" >2050</text>
<text x="2015.6" y="1513" font-size="21" fill="#e3e6e9" text-anchor="middle" textLength="45" lengthAdjust="spacingAndGlyphs" >2100</text>
<text x="2140.875" y="1513" font-size="21" fill="#e3e6e9" text-anchor="middle" textLength="45" lengthAdjust="spacingAndGlyphs" >2150</text>
<text x="2266.15" y="1513" font-size="21" fill="#e3e6e9" text-anchor="middle" textLength="45" lengthAdjust="spacingAndGlyphs" >2200</text>
<text x="2391.425" y="1513" font-size="21" fill="#e3e6e9" text-anchor="middle" textLength="45" lengthAdjust="spacingAndGlyphs" >2250</text>
<text x="2516.7" y="1513" font-size="21" fill="#e3e6e9" text-anchor="middle" textLength="45" lengthAdjust="spacingAndGlyphs" >2300</text>
<text x="2641.9750000000004" y="1513" font-size="21" fill="#e3e6e9" text-anchor="middle" textLength="45" lengthAdjust="spacingAndGlyphs" >2350</text>
<text x="2767.25" y="1513" font-size="21" fill="#e3e6e9" text-anchor="middle" textLength="45" lengthAdjust="spacingAndGlyphs" >2400</text>
<text x="2892.525" y="1513" font-size="21" fill="#e3e6e9" text-anchor="middle" textLength="45" lengthAdjust="spacingAndGlyphs" >2450</text>
<text x="2134" y="1553" font-size="26" fill="#e6e9ec" textLength="136" lengthAdjust="spacingAndGlyphs" >Lifetime (ps)</text>
<text x="0" y="0" font-size="24.5" fill="#dfe3e7" textLength="141" lengthAdjust="spacingAndGlyphs" transform="translate(1455,1276) rotate(-90)">Pixel number</text>
<path d="M1594.2,1476.4 H1699.4 V1465.6 H1701.9 V1476.4 H1732.0 V1465.6 H1734.5 V1476.4 H1772.1 V1465.6 H1774.6 V1476.4 H1802.1 V1465.6 H1804.6 V1476.4 H1812.2 V1465.6 H1814.7 V1476.4 H1830.9 V1465.6 H1833.5 V1476.4 H1839.7 V1465.6 H1842.2 V1476.4 H1844.7 V1465.6 H1847.2 V1454.7 H1849.7 V1465.6 H1852.2 V1476.4 H1861.0 V1465.6 H1863.5 V1476.4 H1869.8 V1465.6 H1872.3 V1476.4 H1878.6 V1454.7 H1881.1 V1465.6 H1883.6 V1443.9 H1886.1 V1454.7 H1889.8 V1465.6 H1892.3 V1443.9 H1895.6 V1465.6 H1902.4 V1454.7 H1906.1 V1443.9 H1908.6 V1465.6 H1912.4 V1465.6 H1914.9 V1433.0 H1917.4 V1454.7 H1922.4 V1433.0 H1924.9 V1443.9 H1928.7 V1433.0 H1931.2 V1443.9 H1934.9 V1433.0 H1937.4 V1422.2 H1939.9 V1433.0 H1944.9 V1411.3 H1947.5 V1422.2 H1951.2 V1400.5 H1953.7 V1433.0 H1956.2 V1411.3 H1958.7 V1465.6 H1961.2 V1411.3 H1965.0 V1433.0 H1968.2 V1411.3 H1971.3 V1443.9 H1973.8 V1465.6 H1976.3 V1411.3 H1979.3 V1433.0 H1982.5 V1411.3 H1987.5 V1411.3 H1991.3 V1400.5 H1995.1 V1411.3 H1997.6 V1433.0 H2002.6 V1400.5 H2006.6 V1389.6 H2010.8 V1346.2 H2013.3 V1292.0 H2015.9 V1407.0 H2017.1 V1306.1 H2020.9 V1292.0 H2023.6 V1292.0 H2027.6 V1335.4 H2032.1 V1386.4 H2036.1 V1292.0 H2039.7 V1422.2 H2042.7 V1324.5 H2046.9 V1259.4 H2051.2 V1237.7 H2053.2 V1367.9 H2057.4 V1292.0 H2061.7 V1324.5 H2065.2 V1302.8 H2067.7 V1378.8 H2072.2 V1313.7 H2076.5 V1292.0 H2080.7 V1335.4 H2082.7 V1281.1 H2089.3 V1324.5 H2093.5 V1183.5 H2097.8 V1226.9 H2101.8 V1324.5 H2108.3 V1324.5 H2112.6 V1248.6 H2114.6 V1140.1 H2116.6 V1281.1 H2120.8 V1183.5 H2125.1 V1216.0 H2129.4 V1166.1 H2133.6 V1129.3 H2137.9 V1216.0 H2142.1 V1129.3 H2145.4 V1042.5 H2149.6 V1059.8 H2152.7 V1194.4 H2156.9 V1140.1 H2161.2 V1172.7 H2165.4 V1140.1 H2169.7 V1226.9 H2173.7 V1075.0 H2178.0 V1151.0 H2182.2 V1129.3 H2186.5 V1075.0 H2190.7 V1183.5 H2195.0 V1096.7 H2199.3 V1151.0 H2201.3 V1194.4 H2204.8 V1053.3 H2207.8 V1183.5 H2211.8 V1140.1 H2216.0 V1107.6 H2218.3 V988.2 H2221.6 V1226.9 H2224.6 V977.4 H2228.8 V1053.3 H2233.1 V1107.6 H2237.3 V1129.3 H2239.3 V1075.0 H2242.3 V977.4 H2244.9 V1226.9 H2247.9 V1064.2 H2252.1 V1107.6 H2257.1 V999.1 H2260.6 V1075.0 H2266.9 V1085.9 H2271.2 V1194.4 H2275.4 V1129.3 H2279.7 V1216.0 H2281.7 V1107.6 H2285.9 V1172.7 H2290.2 V1064.2 H2294.5 V1216.0 H2297.7 V1118.4 H2302.0 V1096.7 H2305.0 V1161.8 H2308.0 V1292.0 H2311.3 V1161.8 H2315.5 V1129.3 H2317.8 V1096.7 H2322.0 V1248.6 H2326.3 V1161.8 H2330.3 V1151.0 H2334.6 V1118.4 H2338.8 V1313.7 H2343.1 V1172.7 H2348.6 V1129.3 H2352.8 V1161.8 H2357.1 V1205.2 H2361.4 V1324.5 H2365.6 V1216.0 H2370.6 V1248.6 H2374.9 V1313.7 H2378.1 V1216.0 H2379.7 V1194.4 H2383.9 V1270.3 H2388.2 V1226.9 H2392.4 V1292.0 H2395.2 V1237.7 H2397.9 V1378.8 H2402.2 V1357.1 H2405.0 V1318.0 H2409.2 V1324.5 H2412.0 V1292.0 H2414.7 V1346.2 H2417.5 V1270.3 H2421.7 V1346.2 H2424.5 V1281.1 H2427.3 V1270.3 H2431.5 V1292.0 H2432.8 V1335.4 H2435.8 V1378.8 H2438.5 V1357.1 H2444.0 V1324.5 H2448.3 V1335.4 H2452.6 V1378.8 H2456.6 V1324.5 H2459.3 V1400.5 H2463.6 V1346.2 H2467.8 V1411.3 H2470.6 V1346.2 H2474.9 V1454.7 H2479.1 V1389.6 H2484.6 V1367.9 H2487.4 V1367.9 H2491.6 V1433.0 H2494.4 V1400.5 H2498.7 V1433.0 H2501.4 V1357.1 H2505.7 V1400.5 H2509.7 V1367.9 H2512.4 V1422.2 H2516.7 V1433.0 H2519.5 V1443.9 H2523.7 V1400.5 H2526.5 V1378.8 H2530.7 V1433.0 H2533.5 V1400.5 H2539.3 V1443.9 H2544.8 V1422.2 H2550.3 V1465.6 H2554.5 V1378.8 H2558.8 V1454.7 H2561.5 V1454.7 H2565.8 V1465.6 H2568.6 V1433.0 H2572.6 V1400.5 H2576.8 V1465.6 H2579.6 V1400.5 H2583.8 V1443.9 H2588.1 V1454.7 H2590.9 V1422.2 H2596.4 V1454.7 H2600.6 V1476.4 H2604.9 V1454.7 H2609.2 V1411.3 H2613.2 V1454.7 H2618.9 V1422.2 H2622.9 V1465.6 H2627.2 V1443.9 H2632.7 V1465.6 H2637.0 V1411.3 H2642.5 V1443.9 H2648.2 V1454.7 H2655.3 V1465.6 H2665.0 V1454.7 H2670.5 V1476.4 H2674.8 V1465.6 H2679.1 V1476.4 H2687.3 V1454.7 H2690.6 V1476.4 H2694.3 V1454.7 H2697.6 V1476.4 H2701.4 V1443.9 H2705.6 V1476.4 H2712.4 V1465.6 H2718.1 V1476.4 H2760.0 V1465.6 H2765.7 V1476.4 H2867.7 V1476.4" fill="none" stroke="#20abc5" stroke-width="1.7" stroke-linejoin="miter"/>
<path d="M1514,1476.6 H2893.0" stroke="#d8dce0" stroke-width="2.2"/>
<rect x="2941.4" y="866.8" width="27" height="120" fill="#30465a" />
<polygon points="2968.4,893 2948,927 2968.4,961" fill="#ffffff"/>
<rect x="0" y="0" width="3001" height="1" fill="#e6e9ec" />
<rect x="0" y="1" width="3001" height="1" fill="#1c2a3a" />
<rect x="2999" y="0" width="1" height="1626" fill="#1c2a3a" />
<rect x="3000" y="0" width="1" height="1626" fill="#e6e9ec" />
</svg></body></html>
